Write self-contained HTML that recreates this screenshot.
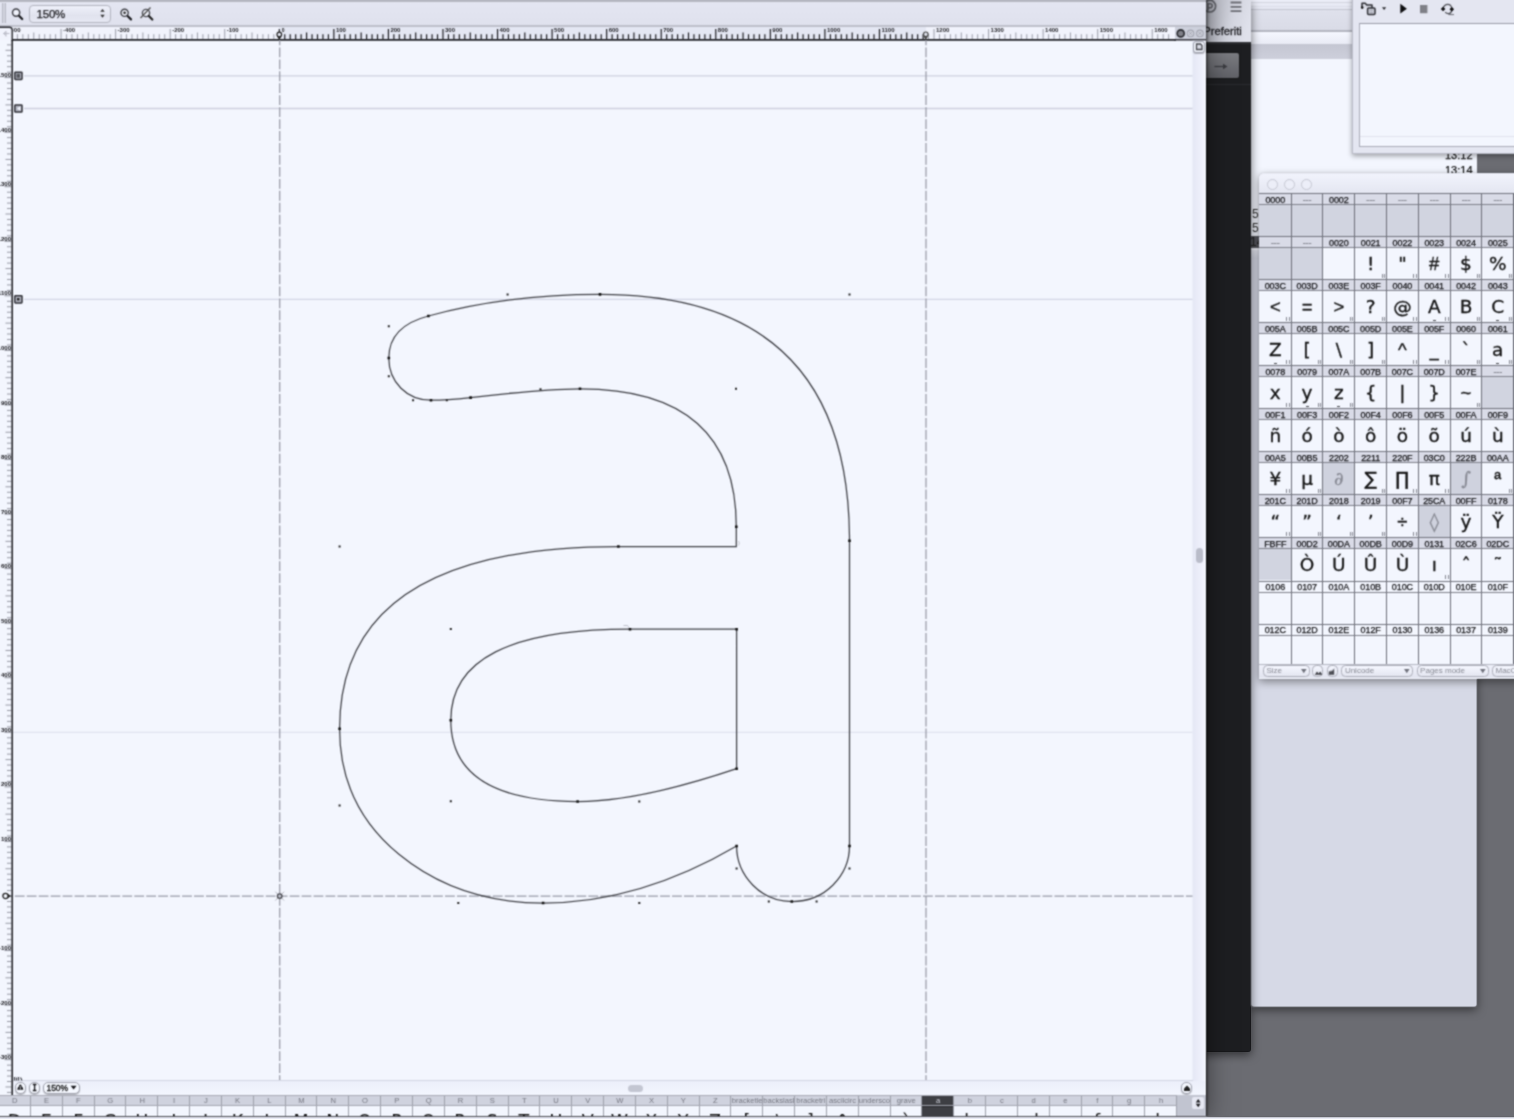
<!DOCTYPE html>
<html><head><meta charset="utf-8"><title>Glyph editor</title>
<style>
html,body{margin:0;padding:0}
body{width:1514px;height:1119px;overflow:hidden;background:#6b6c72;position:relative;font-family:"Liberation Sans","DejaVu Sans",sans-serif;color:#222}
div,svg,span{position:absolute;box-sizing:border-box}
.t{white-space:nowrap}
#all{left:0;top:0;width:1514px;height:1119px;overflow:hidden;filter:url(#bl)}
</style></head><body><svg width="0" height="0" style="left:0;top:0"><filter id="bl" x="0" y="0" width="100%" height="100%" color-interpolation-filters="sRGB"><feConvolveMatrix order="3" kernelMatrix="1 2 1 2 6 2 1 2 1" divisor="18" edgeMode="duplicate" preserveAlpha="true"/></filter></svg><div id="all">
<div style="left:1251px;top:0;width:226px;height:1007px;background:#d6d9e6;border-radius:0 0 3px 3px;box-shadow:0 3px 10px rgba(0,0,0,.5)"></div><div style="left:1251px;top:0;width:226px;height:236px;background:#f3f6fe"></div><div style="left:1251px;top:0;width:226px;height:10px;background:linear-gradient(#eceef8,#e4e6f1)"></div><div style="left:1251px;top:2px;width:226px;height:1px;background:#d2d4df"></div><div style="left:1251px;top:5.500px;width:226px;height:1px;background:#dcdee9"></div><div style="left:1251px;top:9px;width:226px;height:1px;background:#c3c5d0"></div><div style="left:1251px;top:10px;width:226px;height:21px;background:linear-gradient(#dfe1ec,#d9dbe6)"></div><div style="left:1251px;top:30px;width:226px;height:1.500px;background:#b3b5c0"></div><div style="left:1251px;top:32px;width:226px;height:12px;background:linear-gradient(#f5f7ff,#e9ebf5)"></div><div style="left:1251px;top:44px;width:226px;height:15px;background:linear-gradient(#c4c6d2,#cdcfdb)"></div><div class="t" style="left:1252px;top:207px;font-size:12px;color:#333">5</div><div class="t" style="left:1252px;top:221px;font-size:12px;color:#333">5</div><div style="left:1251px;top:236px;width:226px;height:12px;background:#55565c"></div><div class="t" style="left:1250px;top:235px;font-size:12px;color:#222">14</div><div style="left:1251px;top:248px;width:226px;height:2px;background:#f3f5fd"></div><div style="left:1251px;top:250px;width:226px;height:9px;background:linear-gradient(#e6e8f2,#d3d6e2)"></div><div style="left:1477px;top:150px;width:40px;height:24px;background:#6b6c72"></div><div class="t" style="left:1445px;top:148px;font-size:11px;color:#111;-webkit-text-stroke:.25px #111;margin-top:1px">13:12</div><div class="t" style="left:1445px;top:163px;font-size:11px;color:#111;-webkit-text-stroke:.25px #111;margin-top:1px">13:14</div><div style="left:1200px;top:0;width:51px;height:1052px;background:#1d1e21;border-radius:0 0 3px 3px;box-shadow:0 3px 10px rgba(0,0,0,.55)"></div><div style="left:1200px;top:0;width:51px;height:42px;background:linear-gradient(105deg,#9b9da6 6px,#b9bbc5 16px,#d2d4de 34px,#dfe1eb 54px)"></div><div style="left:1200px;top:42px;width:51px;height:2px;background:#2e2f33"></div><div class="t" style="left:1203.3px;top:23.9px;font-size:11.2px;line-height:14px;color:#1b1b1f;-webkit-text-stroke:.3px #1b1b1f">Preferiti</div><svg style="left:1200px;top:0" width="51" height="20" viewBox="1200 0 51 20"><circle cx="1209.800" cy="6.200" r="5.800" fill="none" stroke="#5e5f66" stroke-width="1.700"/><path d="M1208 10.500V3.800h2.200a2 2 0 0 1 0 4h-2" fill="none" stroke="#5e5f66" stroke-width="1.600"/><path d="M1230.600 2.500h10.800M1230.600 6.800h10.800M1230.600 11.100h10.800" stroke="#6a6b72" stroke-width="1.800"/></svg><div style="left:1203px;top:52px;width:37px;height:27px;background:#17181a;border-radius:3px"></div><div style="left:1203px;top:53px;width:36px;height:25px;background:linear-gradient(#7b7c81,#606167);border-radius:2px"></div><svg style="left:1206px;top:53px" width="33" height="25" viewBox="0 0 33 25"><path d="M8.500 13.500h9" stroke="#3a3b40" stroke-width="1.200"/><path d="M17 10.800l4.500 2.700-4.500 2.700z" fill="#3a3b40"/></svg><div style="left:1200px;top:84px;width:51px;height:1px;background:#2a2b2f"></div><div style="left:1351.800px;top:-4px;width:170px;height:158px;background:#e4e6f1;border:1px solid #b9bbc7;box-shadow:0 2px 5px rgba(0,0,0,.35)"></div><div style="left:1359px;top:23px;width:160px;height:124px;background:#f3f6fe;border:1px solid #a9abb7;border-top-color:#9a9ca8"></div><div style="left:1360px;top:136px;width:160px;height:1px;background:#e1e3ee"></div><svg style="left:1352px;top:0" width="162" height="22" viewBox="1352 0 162 22">
<path d="M1362 8V3.200h3.200l1.600 1.800h5.200v3.500" fill="#d9dbe5" stroke="#2e2f34" stroke-width="1.500" stroke-linejoin="round"/>
<rect x="1367.600" y="8" width="7.400" height="6.600" rx="1" fill="#cfd1dc" stroke="#2e2f34" stroke-width="1.500"/>
<path d="M1369.500 10.500h3.600M1369.500 12.500h3.600" stroke="#9a9ca6" stroke-width=".8"/>
<circle cx="1362.200" cy="7.600" r="1.300" fill="#111"/>
<path d="M1382 7.200h4.200l-2.100 2.800z" fill="#2a2a2e"/>
<path d="M1400.300 3.800l6.600 4.900-6.600 4.900z" fill="#0c0c0e"/>
<rect x="1420" y="5" width="7.400" height="8.200" fill="#7f8087"/>
<path d="M1443 8.600q1.200-4.200 4.800-4.200q3.200 0 4 3.800" fill="none" stroke="#4c4d53" stroke-width="1.200"/>
<path d="M1452 10q-.8 3.600-3.600 3.600q-2 0-3.200-1.400" fill="none" stroke="#4c4d53" stroke-width="1.200"/>
<path d="M1448.500 14.600h5.500" stroke="#6c6d74" stroke-width="1"/>
<path d="M1440.800 9l2.300-2.200 2.300 2.200-2.300 2.200zM1449.500 9.200l2.300-2.200 2.300 2.200-2.300 2.200z" fill="#0c0c0e"/>
</svg><div style="left:1259.4px;top:173px;width:262px;height:506px;background:#f3f6fe;border-radius:5px 0 0 0;box-shadow:0 3px 8px rgba(0,0,0,.4),0 0 1px rgba(0,0,0,.4)"></div><div style="left:1259.4px;top:173px;width:262px;height:20px;background:linear-gradient(#f1f3fc,#e4e6f1);border-radius:5px 0 0 0;border-top:1px solid #e8eaf4"></div><div style="left:1266.5px;top:178.500px;width:11px;height:11px;border-radius:6px;border:1px solid #c4c6d1;background:#eceef8"></div><div style="left:1283.5px;top:178.500px;width:11px;height:11px;border-radius:6px;border:1px solid #c4c6d1;background:#eceef8"></div><div style="left:1300.5px;top:178.500px;width:11px;height:11px;border-radius:6px;border:1px solid #c4c6d1;background:#eceef8"></div><div style="left:1259.4px;top:193.0px;width:260px;height:470.500px;overflow:hidden"><div style="left:0.00px;top:0.00px;width:31.79px;height:12px;background:#d9dbe7"></div><div style="left:0.00px;top:12.00px;width:31.79px;height:31px;background:#d1d4e0"></div><div class="t" style="left:0.00px;top:0.50px;width:31.79px;height:12px;line-height:12.5px;text-align:center;font-size:9px;color:#111114;-webkit-text-stroke:.25px #111114;letter-spacing:-.1px">0000</div><div style="left:31.79px;top:0.00px;width:31.79px;height:12px;background:#d9dbe7"></div><div style="left:31.79px;top:12.00px;width:31.79px;height:31px;background:#d1d4e0"></div><div class="t" style="left:31.79px;top:0.50px;width:31.79px;height:12px;line-height:12.5px;text-align:center;font-size:9px;color:#7d7f89;-webkit-text-stroke:.25px #7d7f89;letter-spacing:-.1px">---</div><div style="left:63.57px;top:0.00px;width:31.79px;height:12px;background:#d9dbe7"></div><div style="left:63.57px;top:12.00px;width:31.79px;height:31px;background:#d1d4e0"></div><div class="t" style="left:63.57px;top:0.50px;width:31.79px;height:12px;line-height:12.5px;text-align:center;font-size:9px;color:#111114;-webkit-text-stroke:.25px #111114;letter-spacing:-.1px">0002</div><div style="left:95.36px;top:0.00px;width:31.79px;height:12px;background:#d9dbe7"></div><div style="left:95.36px;top:12.00px;width:31.79px;height:31px;background:#d1d4e0"></div><div class="t" style="left:95.36px;top:0.50px;width:31.79px;height:12px;line-height:12.5px;text-align:center;font-size:9px;color:#7d7f89;-webkit-text-stroke:.25px #7d7f89;letter-spacing:-.1px">---</div><div style="left:127.14px;top:0.00px;width:31.79px;height:12px;background:#d9dbe7"></div><div style="left:127.14px;top:12.00px;width:31.79px;height:31px;background:#d1d4e0"></div><div class="t" style="left:127.14px;top:0.50px;width:31.79px;height:12px;line-height:12.5px;text-align:center;font-size:9px;color:#7d7f89;-webkit-text-stroke:.25px #7d7f89;letter-spacing:-.1px">---</div><div style="left:158.93px;top:0.00px;width:31.79px;height:12px;background:#d9dbe7"></div><div style="left:158.93px;top:12.00px;width:31.79px;height:31px;background:#d1d4e0"></div><div class="t" style="left:158.93px;top:0.50px;width:31.79px;height:12px;line-height:12.5px;text-align:center;font-size:9px;color:#7d7f89;-webkit-text-stroke:.25px #7d7f89;letter-spacing:-.1px">---</div><div style="left:190.72px;top:0.00px;width:31.79px;height:12px;background:#d9dbe7"></div><div style="left:190.72px;top:12.00px;width:31.79px;height:31px;background:#d1d4e0"></div><div class="t" style="left:190.72px;top:0.50px;width:31.79px;height:12px;line-height:12.5px;text-align:center;font-size:9px;color:#7d7f89;-webkit-text-stroke:.25px #7d7f89;letter-spacing:-.1px">---</div><div style="left:222.50px;top:0.00px;width:31.79px;height:12px;background:#d9dbe7"></div><div style="left:222.50px;top:12.00px;width:31.79px;height:31px;background:#d1d4e0"></div><div class="t" style="left:222.50px;top:0.50px;width:31.79px;height:12px;line-height:12.5px;text-align:center;font-size:9px;color:#7d7f89;-webkit-text-stroke:.25px #7d7f89;letter-spacing:-.1px">---</div><div style="left:0;top:0.00px;width:262px;height:1px;background:#72747e"></div><div style="left:0;top:11.00px;width:262px;height:1px;background:#7f818b"></div><div style="left:0.00px;top:43.06px;width:31.79px;height:12px;background:#d9dbe7"></div><div style="left:0.00px;top:55.06px;width:31.79px;height:31px;background:#d1d4e0"></div><div class="t" style="left:0.00px;top:43.56px;width:31.79px;height:12px;line-height:12.5px;text-align:center;font-size:9px;color:#7d7f89;-webkit-text-stroke:.25px #7d7f89;letter-spacing:-.1px">---</div><div style="left:31.79px;top:43.06px;width:31.79px;height:12px;background:#d9dbe7"></div><div style="left:31.79px;top:55.06px;width:31.79px;height:31px;background:#d1d4e0"></div><div class="t" style="left:31.79px;top:43.56px;width:31.79px;height:12px;line-height:12.5px;text-align:center;font-size:9px;color:#7d7f89;-webkit-text-stroke:.25px #7d7f89;letter-spacing:-.1px">---</div><div style="left:63.57px;top:43.06px;width:31.79px;height:12px;background:#d9dbe7"></div><div style="left:63.57px;top:55.06px;width:31.79px;height:31px;background:#f3f6fe"></div><div class="t" style="left:63.57px;top:43.56px;width:31.79px;height:12px;line-height:12.5px;text-align:center;font-size:9px;color:#111114;-webkit-text-stroke:.25px #111114;letter-spacing:-.1px">0020</div><div style="left:95.36px;top:43.06px;width:31.79px;height:12px;background:#d9dbe7"></div><div style="left:95.36px;top:55.06px;width:31.79px;height:31px;background:#f3f6fe"></div><div class="t" style="left:95.36px;top:43.56px;width:31.79px;height:12px;line-height:12.5px;text-align:center;font-size:9px;color:#111114;-webkit-text-stroke:.25px #111114;letter-spacing:-.1px">0021</div><div class="t" style="left:95.36px;top:54.86px;width:31.79px;height:31px;line-height:31px;text-align:center;font-size:18.500px;-webkit-text-stroke:.3px #111;font-family:'DejaVu Sans','Liberation Sans',sans-serif;color:#111">!</div><div style="left:122.14px;top:81.06px;width:3.500px;height:4px;border-left:1.200px solid #83858f;border-right:1.200px solid #83858f"></div><div style="left:127.14px;top:43.06px;width:31.79px;height:12px;background:#d9dbe7"></div><div style="left:127.14px;top:55.06px;width:31.79px;height:31px;background:#f3f6fe"></div><div class="t" style="left:127.14px;top:43.56px;width:31.79px;height:12px;line-height:12.5px;text-align:center;font-size:9px;color:#111114;-webkit-text-stroke:.25px #111114;letter-spacing:-.1px">0022</div><div class="t" style="left:127.14px;top:54.86px;width:31.79px;height:31px;line-height:31px;text-align:center;font-size:18.500px;-webkit-text-stroke:.3px #111;font-family:'DejaVu Sans','Liberation Sans',sans-serif;color:#111">&quot;</div><div style="left:153.93px;top:81.06px;width:3.500px;height:4px;border-left:1.200px solid #83858f;border-right:1.200px solid #83858f"></div><div style="left:158.93px;top:43.06px;width:31.79px;height:12px;background:#d9dbe7"></div><div style="left:158.93px;top:55.06px;width:31.79px;height:31px;background:#f3f6fe"></div><div class="t" style="left:158.93px;top:43.56px;width:31.79px;height:12px;line-height:12.5px;text-align:center;font-size:9px;color:#111114;-webkit-text-stroke:.25px #111114;letter-spacing:-.1px">0023</div><div class="t" style="left:158.93px;top:54.86px;width:31.79px;height:31px;line-height:31px;text-align:center;font-size:18.500px;-webkit-text-stroke:.3px #111;font-family:'Liberation Sans',sans-serif;color:#111">#</div><div style="left:185.72px;top:81.06px;width:3.500px;height:4px;border-left:1.200px solid #83858f;border-right:1.200px solid #83858f"></div><div style="left:190.72px;top:43.06px;width:31.79px;height:12px;background:#d9dbe7"></div><div style="left:190.72px;top:55.06px;width:31.79px;height:31px;background:#f3f6fe"></div><div class="t" style="left:190.72px;top:43.56px;width:31.79px;height:12px;line-height:12.5px;text-align:center;font-size:9px;color:#111114;-webkit-text-stroke:.25px #111114;letter-spacing:-.1px">0024</div><div class="t" style="left:190.72px;top:54.86px;width:31.79px;height:31px;line-height:31px;text-align:center;font-size:18.500px;-webkit-text-stroke:.3px #111;font-family:'DejaVu Sans','Liberation Sans',sans-serif;color:#111">$</div><div style="left:217.50px;top:81.06px;width:3.500px;height:4px;border-left:1.200px solid #83858f;border-right:1.200px solid #83858f"></div><div style="left:222.50px;top:43.06px;width:31.79px;height:12px;background:#d9dbe7"></div><div style="left:222.50px;top:55.06px;width:31.79px;height:31px;background:#f3f6fe"></div><div class="t" style="left:222.50px;top:43.56px;width:31.79px;height:12px;line-height:12.5px;text-align:center;font-size:9px;color:#111114;-webkit-text-stroke:.25px #111114;letter-spacing:-.1px">0025</div><div class="t" style="left:222.50px;top:54.86px;width:31.79px;height:31px;line-height:31px;text-align:center;font-size:18.500px;-webkit-text-stroke:.3px #111;font-family:'DejaVu Sans','Liberation Sans',sans-serif;color:#111">%</div><div style="left:249.29px;top:81.06px;width:3.500px;height:4px;border-left:1.200px solid #83858f;border-right:1.200px solid #83858f"></div><div style="left:0;top:43.00px;width:262px;height:1px;background:#72747e"></div><div style="left:0;top:54.00px;width:262px;height:1px;background:#7f818b"></div><div style="left:0.00px;top:86.12px;width:31.79px;height:12px;background:#d9dbe7"></div><div style="left:0.00px;top:98.12px;width:31.79px;height:31px;background:#f3f6fe"></div><div class="t" style="left:0.00px;top:86.62px;width:31.79px;height:12px;line-height:12.5px;text-align:center;font-size:9px;color:#111114;-webkit-text-stroke:.25px #111114;letter-spacing:-.1px">003C</div><div class="t" style="left:0.00px;top:97.92px;width:31.79px;height:31px;line-height:31px;text-align:center;font-size:18.500px;-webkit-text-stroke:.3px #111;font-family:'Liberation Sans',sans-serif;color:#111">&lt;</div><div style="left:26.79px;top:124.12px;width:3.500px;height:4px;border-left:1.200px solid #83858f;border-right:1.200px solid #83858f"></div><div style="left:31.79px;top:86.12px;width:31.79px;height:12px;background:#d9dbe7"></div><div style="left:31.79px;top:98.12px;width:31.79px;height:31px;background:#f3f6fe"></div><div class="t" style="left:31.79px;top:86.62px;width:31.79px;height:12px;line-height:12.5px;text-align:center;font-size:9px;color:#111114;-webkit-text-stroke:.25px #111114;letter-spacing:-.1px">003D</div><div class="t" style="left:31.79px;top:97.92px;width:31.79px;height:31px;line-height:31px;text-align:center;font-size:18.500px;-webkit-text-stroke:.3px #111;font-family:'Liberation Sans',sans-serif;color:#111">=</div><div style="left:63.57px;top:86.12px;width:31.79px;height:12px;background:#d9dbe7"></div><div style="left:63.57px;top:98.12px;width:31.79px;height:31px;background:#f3f6fe"></div><div class="t" style="left:63.57px;top:86.62px;width:31.79px;height:12px;line-height:12.5px;text-align:center;font-size:9px;color:#111114;-webkit-text-stroke:.25px #111114;letter-spacing:-.1px">003E</div><div class="t" style="left:63.57px;top:97.92px;width:31.79px;height:31px;line-height:31px;text-align:center;font-size:18.500px;-webkit-text-stroke:.3px #111;font-family:'Liberation Sans',sans-serif;color:#111">&gt;</div><div style="left:90.36px;top:124.12px;width:3.500px;height:4px;border-left:1.200px solid #83858f;border-right:1.200px solid #83858f"></div><div style="left:95.36px;top:86.12px;width:31.79px;height:12px;background:#d9dbe7"></div><div style="left:95.36px;top:98.12px;width:31.79px;height:31px;background:#f3f6fe"></div><div class="t" style="left:95.36px;top:86.62px;width:31.79px;height:12px;line-height:12.5px;text-align:center;font-size:9px;color:#111114;-webkit-text-stroke:.25px #111114;letter-spacing:-.1px">003F</div><div class="t" style="left:95.36px;top:97.92px;width:31.79px;height:31px;line-height:31px;text-align:center;font-size:18.500px;-webkit-text-stroke:.3px #111;font-family:'DejaVu Sans','Liberation Sans',sans-serif;color:#111">?</div><div style="left:122.14px;top:124.12px;width:3.500px;height:4px;border-left:1.200px solid #83858f;border-right:1.200px solid #83858f"></div><div style="left:127.14px;top:86.12px;width:31.79px;height:12px;background:#d9dbe7"></div><div style="left:127.14px;top:98.12px;width:31.79px;height:31px;background:#f3f6fe"></div><div class="t" style="left:127.14px;top:86.62px;width:31.79px;height:12px;line-height:12.5px;text-align:center;font-size:9px;color:#111114;-webkit-text-stroke:.25px #111114;letter-spacing:-.1px">0040</div><div class="t" style="left:127.14px;top:97.92px;width:31.79px;height:31px;line-height:31px;text-align:center;font-size:18.500px;-webkit-text-stroke:.3px #111;font-family:'DejaVu Sans','Liberation Sans',sans-serif;color:#111">@</div><div style="left:153.93px;top:124.12px;width:3.500px;height:4px;border-left:1.200px solid #83858f;border-right:1.200px solid #83858f"></div><div style="left:158.93px;top:86.12px;width:31.79px;height:12px;background:#d9dbe7"></div><div style="left:158.93px;top:98.12px;width:31.79px;height:31px;background:#f3f6fe"></div><div class="t" style="left:158.93px;top:86.62px;width:31.79px;height:12px;line-height:12.5px;text-align:center;font-size:9px;color:#111114;-webkit-text-stroke:.25px #111114;letter-spacing:-.1px">0041</div><div class="t" style="left:158.93px;top:97.92px;width:31.79px;height:31px;line-height:31px;text-align:center;font-size:18.500px;-webkit-text-stroke:.3px #111;font-family:'DejaVu Sans','Liberation Sans',sans-serif;color:#111">A</div><div style="left:185.72px;top:124.12px;width:3.500px;height:4px;border-left:1.200px solid #83858f;border-right:1.200px solid #83858f"></div><div style="left:173.32px;top:126.62px;width:3px;height:1.500px;background:#44454b"></div><div style="left:190.72px;top:86.12px;width:31.79px;height:12px;background:#d9dbe7"></div><div style="left:190.72px;top:98.12px;width:31.79px;height:31px;background:#f3f6fe"></div><div class="t" style="left:190.72px;top:86.62px;width:31.79px;height:12px;line-height:12.5px;text-align:center;font-size:9px;color:#111114;-webkit-text-stroke:.25px #111114;letter-spacing:-.1px">0042</div><div class="t" style="left:190.72px;top:97.92px;width:31.79px;height:31px;line-height:31px;text-align:center;font-size:18.500px;-webkit-text-stroke:.3px #111;font-family:'DejaVu Sans','Liberation Sans',sans-serif;color:#111">B</div><div style="left:217.50px;top:124.12px;width:3.500px;height:4px;border-left:1.200px solid #83858f;border-right:1.200px solid #83858f"></div><div style="left:222.50px;top:86.12px;width:31.79px;height:12px;background:#d9dbe7"></div><div style="left:222.50px;top:98.12px;width:31.79px;height:31px;background:#f3f6fe"></div><div class="t" style="left:222.50px;top:86.62px;width:31.79px;height:12px;line-height:12.5px;text-align:center;font-size:9px;color:#111114;-webkit-text-stroke:.25px #111114;letter-spacing:-.1px">0043</div><div class="t" style="left:222.50px;top:97.92px;width:31.79px;height:31px;line-height:31px;text-align:center;font-size:18.500px;-webkit-text-stroke:.3px #111;font-family:'DejaVu Sans','Liberation Sans',sans-serif;color:#111">C</div><div style="left:249.29px;top:124.12px;width:3.500px;height:4px;border-left:1.200px solid #83858f;border-right:1.200px solid #83858f"></div><div style="left:236.90px;top:126.62px;width:3px;height:1.500px;background:#44454b"></div><div style="left:0;top:86.00px;width:262px;height:1px;background:#72747e"></div><div style="left:0;top:97.00px;width:262px;height:1px;background:#7f818b"></div><div style="left:0.00px;top:129.18px;width:31.79px;height:12px;background:#d9dbe7"></div><div style="left:0.00px;top:141.18px;width:31.79px;height:31px;background:#f3f6fe"></div><div class="t" style="left:0.00px;top:129.68px;width:31.79px;height:12px;line-height:12.5px;text-align:center;font-size:9px;color:#111114;-webkit-text-stroke:.25px #111114;letter-spacing:-.1px">005A</div><div class="t" style="left:0.00px;top:140.98px;width:31.79px;height:31px;line-height:31px;text-align:center;font-size:18.500px;-webkit-text-stroke:.3px #111;font-family:'DejaVu Sans','Liberation Sans',sans-serif;color:#111">Z</div><div style="left:26.79px;top:167.18px;width:3.500px;height:4px;border-left:1.200px solid #83858f;border-right:1.200px solid #83858f"></div><div style="left:14.39px;top:169.68px;width:3px;height:1.500px;background:#44454b"></div><div style="left:31.79px;top:129.18px;width:31.79px;height:12px;background:#d9dbe7"></div><div style="left:31.79px;top:141.18px;width:31.79px;height:31px;background:#f3f6fe"></div><div class="t" style="left:31.79px;top:129.68px;width:31.79px;height:12px;line-height:12.5px;text-align:center;font-size:9px;color:#111114;-webkit-text-stroke:.25px #111114;letter-spacing:-.1px">005B</div><div class="t" style="left:31.79px;top:140.98px;width:31.79px;height:31px;line-height:31px;text-align:center;font-size:18.500px;-webkit-text-stroke:.3px #111;font-family:'DejaVu Sans','Liberation Sans',sans-serif;color:#111">[</div><div style="left:58.57px;top:167.18px;width:3.500px;height:4px;border-left:1.200px solid #83858f;border-right:1.200px solid #83858f"></div><div style="left:63.57px;top:129.18px;width:31.79px;height:12px;background:#d9dbe7"></div><div style="left:63.57px;top:141.18px;width:31.79px;height:31px;background:#f3f6fe"></div><div class="t" style="left:63.57px;top:129.68px;width:31.79px;height:12px;line-height:12.5px;text-align:center;font-size:9px;color:#111114;-webkit-text-stroke:.25px #111114;letter-spacing:-.1px">005C</div><div class="t" style="left:63.57px;top:140.98px;width:31.79px;height:31px;line-height:31px;text-align:center;font-size:18.500px;-webkit-text-stroke:.3px #111;font-family:'DejaVu Sans','Liberation Sans',sans-serif;color:#111">\</div><div style="left:90.36px;top:167.18px;width:3.500px;height:4px;border-left:1.200px solid #83858f;border-right:1.200px solid #83858f"></div><div style="left:95.36px;top:129.18px;width:31.79px;height:12px;background:#d9dbe7"></div><div style="left:95.36px;top:141.18px;width:31.79px;height:31px;background:#f3f6fe"></div><div class="t" style="left:95.36px;top:129.68px;width:31.79px;height:12px;line-height:12.5px;text-align:center;font-size:9px;color:#111114;-webkit-text-stroke:.25px #111114;letter-spacing:-.1px">005D</div><div class="t" style="left:95.36px;top:140.98px;width:31.79px;height:31px;line-height:31px;text-align:center;font-size:18.500px;-webkit-text-stroke:.3px #111;font-family:'DejaVu Sans','Liberation Sans',sans-serif;color:#111">]</div><div style="left:122.14px;top:167.18px;width:3.500px;height:4px;border-left:1.200px solid #83858f;border-right:1.200px solid #83858f"></div><div style="left:127.14px;top:129.18px;width:31.79px;height:12px;background:#d9dbe7"></div><div style="left:127.14px;top:141.18px;width:31.79px;height:31px;background:#f3f6fe"></div><div class="t" style="left:127.14px;top:129.68px;width:31.79px;height:12px;line-height:12.5px;text-align:center;font-size:9px;color:#111114;-webkit-text-stroke:.25px #111114;letter-spacing:-.1px">005E</div><div class="t" style="left:127.14px;top:140.98px;width:31.79px;height:31px;line-height:31px;text-align:center;font-size:18.500px;-webkit-text-stroke:.3px #111;font-family:'Liberation Sans',sans-serif;color:#111">^</div><div style="left:153.93px;top:167.18px;width:3.500px;height:4px;border-left:1.200px solid #83858f;border-right:1.200px solid #83858f"></div><div style="left:158.93px;top:129.18px;width:31.79px;height:12px;background:#d9dbe7"></div><div style="left:158.93px;top:141.18px;width:31.79px;height:31px;background:#f3f6fe"></div><div class="t" style="left:158.93px;top:129.68px;width:31.79px;height:12px;line-height:12.5px;text-align:center;font-size:9px;color:#111114;-webkit-text-stroke:.25px #111114;letter-spacing:-.1px">005F</div><div class="t" style="left:158.93px;top:140.98px;width:31.79px;height:31px;line-height:31px;text-align:center;font-size:18.500px;-webkit-text-stroke:.3px #111;font-family:'DejaVu Sans','Liberation Sans',sans-serif;color:#111">_</div><div style="left:185.72px;top:167.18px;width:3.500px;height:4px;border-left:1.200px solid #83858f;border-right:1.200px solid #83858f"></div><div style="left:190.72px;top:129.18px;width:31.79px;height:12px;background:#d9dbe7"></div><div style="left:190.72px;top:141.18px;width:31.79px;height:31px;background:#f3f6fe"></div><div class="t" style="left:190.72px;top:129.68px;width:31.79px;height:12px;line-height:12.5px;text-align:center;font-size:9px;color:#111114;-webkit-text-stroke:.25px #111114;letter-spacing:-.1px">0060</div><div class="t" style="left:190.72px;top:140.98px;width:31.79px;height:31px;line-height:31px;text-align:center;font-size:18.500px;-webkit-text-stroke:.3px #111;font-family:'DejaVu Sans','Liberation Sans',sans-serif;color:#111">`</div><div style="left:217.50px;top:167.18px;width:3.500px;height:4px;border-left:1.200px solid #83858f;border-right:1.200px solid #83858f"></div><div style="left:222.50px;top:129.18px;width:31.79px;height:12px;background:#d9dbe7"></div><div style="left:222.50px;top:141.18px;width:31.79px;height:31px;background:#f3f6fe"></div><div class="t" style="left:222.50px;top:129.68px;width:31.79px;height:12px;line-height:12.5px;text-align:center;font-size:9px;color:#111114;-webkit-text-stroke:.25px #111114;letter-spacing:-.1px">0061</div><div class="t" style="left:222.50px;top:140.98px;width:31.79px;height:31px;line-height:31px;text-align:center;font-size:18.500px;-webkit-text-stroke:.3px #111;font-family:'DejaVu Sans','Liberation Sans',sans-serif;color:#111">a</div><div style="left:249.29px;top:167.18px;width:3.500px;height:4px;border-left:1.200px solid #83858f;border-right:1.200px solid #83858f"></div><div style="left:236.90px;top:169.68px;width:3px;height:1.500px;background:#44454b"></div><div style="left:0;top:129.00px;width:262px;height:1px;background:#72747e"></div><div style="left:0;top:140.00px;width:262px;height:1px;background:#7f818b"></div><div style="left:0.00px;top:172.24px;width:31.79px;height:12px;background:#d9dbe7"></div><div style="left:0.00px;top:184.24px;width:31.79px;height:31px;background:#f3f6fe"></div><div class="t" style="left:0.00px;top:172.74px;width:31.79px;height:12px;line-height:12.5px;text-align:center;font-size:9px;color:#111114;-webkit-text-stroke:.25px #111114;letter-spacing:-.1px">0078</div><div class="t" style="left:0.00px;top:184.04px;width:31.79px;height:31px;line-height:31px;text-align:center;font-size:18.500px;-webkit-text-stroke:.3px #111;font-family:'DejaVu Sans','Liberation Sans',sans-serif;color:#111">x</div><div style="left:26.79px;top:210.24px;width:3.500px;height:4px;border-left:1.200px solid #83858f;border-right:1.200px solid #83858f"></div><div style="left:31.79px;top:172.24px;width:31.79px;height:12px;background:#d9dbe7"></div><div style="left:31.79px;top:184.24px;width:31.79px;height:31px;background:#f3f6fe"></div><div class="t" style="left:31.79px;top:172.74px;width:31.79px;height:12px;line-height:12.5px;text-align:center;font-size:9px;color:#111114;-webkit-text-stroke:.25px #111114;letter-spacing:-.1px">0079</div><div class="t" style="left:31.79px;top:184.04px;width:31.79px;height:31px;line-height:31px;text-align:center;font-size:18.500px;-webkit-text-stroke:.3px #111;font-family:'DejaVu Sans','Liberation Sans',sans-serif;color:#111">y</div><div style="left:58.57px;top:210.24px;width:3.500px;height:4px;border-left:1.200px solid #83858f;border-right:1.200px solid #83858f"></div><div style="left:46.18px;top:212.74px;width:3px;height:1.500px;background:#44454b"></div><div style="left:63.57px;top:172.24px;width:31.79px;height:12px;background:#d9dbe7"></div><div style="left:63.57px;top:184.24px;width:31.79px;height:31px;background:#f3f6fe"></div><div class="t" style="left:63.57px;top:172.74px;width:31.79px;height:12px;line-height:12.5px;text-align:center;font-size:9px;color:#111114;-webkit-text-stroke:.25px #111114;letter-spacing:-.1px">007A</div><div class="t" style="left:63.57px;top:184.04px;width:31.79px;height:31px;line-height:31px;text-align:center;font-size:18.500px;-webkit-text-stroke:.3px #111;font-family:'DejaVu Sans','Liberation Sans',sans-serif;color:#111">z</div><div style="left:90.36px;top:210.24px;width:3.500px;height:4px;border-left:1.200px solid #83858f;border-right:1.200px solid #83858f"></div><div style="left:77.97px;top:212.74px;width:3px;height:1.500px;background:#44454b"></div><div style="left:95.36px;top:172.24px;width:31.79px;height:12px;background:#d9dbe7"></div><div style="left:95.36px;top:184.24px;width:31.79px;height:31px;background:#f3f6fe"></div><div class="t" style="left:95.36px;top:172.74px;width:31.79px;height:12px;line-height:12.5px;text-align:center;font-size:9px;color:#111114;-webkit-text-stroke:.25px #111114;letter-spacing:-.1px">007B</div><div class="t" style="left:95.36px;top:184.04px;width:31.79px;height:31px;line-height:31px;text-align:center;font-size:18.500px;-webkit-text-stroke:.3px #111;font-family:'DejaVu Sans','Liberation Sans',sans-serif;color:#111">{</div><div style="left:127.14px;top:172.24px;width:31.79px;height:12px;background:#d9dbe7"></div><div style="left:127.14px;top:184.24px;width:31.79px;height:31px;background:#f3f6fe"></div><div class="t" style="left:127.14px;top:172.74px;width:31.79px;height:12px;line-height:12.5px;text-align:center;font-size:9px;color:#111114;-webkit-text-stroke:.25px #111114;letter-spacing:-.1px">007C</div><div class="t" style="left:127.14px;top:184.04px;width:31.79px;height:31px;line-height:31px;text-align:center;font-size:18.500px;-webkit-text-stroke:.3px #111;font-family:'DejaVu Sans','Liberation Sans',sans-serif;color:#111">|</div><div style="left:158.93px;top:172.24px;width:31.79px;height:12px;background:#d9dbe7"></div><div style="left:158.93px;top:184.24px;width:31.79px;height:31px;background:#f3f6fe"></div><div class="t" style="left:158.93px;top:172.74px;width:31.79px;height:12px;line-height:12.5px;text-align:center;font-size:9px;color:#111114;-webkit-text-stroke:.25px #111114;letter-spacing:-.1px">007D</div><div class="t" style="left:158.93px;top:184.04px;width:31.79px;height:31px;line-height:31px;text-align:center;font-size:18.500px;-webkit-text-stroke:.3px #111;font-family:'DejaVu Sans','Liberation Sans',sans-serif;color:#111">}</div><div style="left:190.72px;top:172.24px;width:31.79px;height:12px;background:#d9dbe7"></div><div style="left:190.72px;top:184.24px;width:31.79px;height:31px;background:#f3f6fe"></div><div class="t" style="left:190.72px;top:172.74px;width:31.79px;height:12px;line-height:12.5px;text-align:center;font-size:9px;color:#111114;-webkit-text-stroke:.25px #111114;letter-spacing:-.1px">007E</div><div class="t" style="left:190.72px;top:184.04px;width:31.79px;height:31px;line-height:31px;text-align:center;font-size:18.500px;-webkit-text-stroke:.3px #111;font-family:'Liberation Sans',sans-serif;color:#111">~</div><div style="left:217.50px;top:210.24px;width:3.500px;height:4px;border-left:1.200px solid #83858f;border-right:1.200px solid #83858f"></div><div style="left:222.50px;top:172.24px;width:31.79px;height:12px;background:#d9dbe7"></div><div style="left:222.50px;top:184.24px;width:31.79px;height:31px;background:#d1d4e0"></div><div class="t" style="left:222.50px;top:172.74px;width:31.79px;height:12px;line-height:12.5px;text-align:center;font-size:9px;color:#7d7f89;-webkit-text-stroke:.25px #7d7f89;letter-spacing:-.1px">---</div><div style="left:0;top:172.00px;width:262px;height:1px;background:#72747e"></div><div style="left:0;top:183.00px;width:262px;height:1px;background:#7f818b"></div><div style="left:0.00px;top:215.30px;width:31.79px;height:12px;background:#d9dbe7"></div><div style="left:0.00px;top:227.30px;width:31.79px;height:31px;background:#f3f6fe"></div><div class="t" style="left:0.00px;top:215.80px;width:31.79px;height:12px;line-height:12.5px;text-align:center;font-size:9px;color:#111114;-webkit-text-stroke:.25px #111114;letter-spacing:-.1px">00F1</div><div class="t" style="left:0.00px;top:227.10px;width:31.79px;height:31px;line-height:31px;text-align:center;font-size:18.500px;-webkit-text-stroke:.3px #111;font-family:'DejaVu Sans','Liberation Sans',sans-serif;color:#111">ñ</div><div style="left:31.79px;top:215.30px;width:31.79px;height:12px;background:#d9dbe7"></div><div style="left:31.79px;top:227.30px;width:31.79px;height:31px;background:#f3f6fe"></div><div class="t" style="left:31.79px;top:215.80px;width:31.79px;height:12px;line-height:12.5px;text-align:center;font-size:9px;color:#111114;-webkit-text-stroke:.25px #111114;letter-spacing:-.1px">00F3</div><div class="t" style="left:31.79px;top:227.10px;width:31.79px;height:31px;line-height:31px;text-align:center;font-size:18.500px;-webkit-text-stroke:.3px #111;font-family:'DejaVu Sans','Liberation Sans',sans-serif;color:#111">ó</div><div style="left:63.57px;top:215.30px;width:31.79px;height:12px;background:#d9dbe7"></div><div style="left:63.57px;top:227.30px;width:31.79px;height:31px;background:#f3f6fe"></div><div class="t" style="left:63.57px;top:215.80px;width:31.79px;height:12px;line-height:12.5px;text-align:center;font-size:9px;color:#111114;-webkit-text-stroke:.25px #111114;letter-spacing:-.1px">00F2</div><div class="t" style="left:63.57px;top:227.10px;width:31.79px;height:31px;line-height:31px;text-align:center;font-size:18.500px;-webkit-text-stroke:.3px #111;font-family:'DejaVu Sans','Liberation Sans',sans-serif;color:#111">ò</div><div style="left:95.36px;top:215.30px;width:31.79px;height:12px;background:#d9dbe7"></div><div style="left:95.36px;top:227.30px;width:31.79px;height:31px;background:#f3f6fe"></div><div class="t" style="left:95.36px;top:215.80px;width:31.79px;height:12px;line-height:12.5px;text-align:center;font-size:9px;color:#111114;-webkit-text-stroke:.25px #111114;letter-spacing:-.1px">00F4</div><div class="t" style="left:95.36px;top:227.10px;width:31.79px;height:31px;line-height:31px;text-align:center;font-size:18.500px;-webkit-text-stroke:.3px #111;font-family:'DejaVu Sans','Liberation Sans',sans-serif;color:#111">ô</div><div style="left:127.14px;top:215.30px;width:31.79px;height:12px;background:#d9dbe7"></div><div style="left:127.14px;top:227.30px;width:31.79px;height:31px;background:#f3f6fe"></div><div class="t" style="left:127.14px;top:215.80px;width:31.79px;height:12px;line-height:12.5px;text-align:center;font-size:9px;color:#111114;-webkit-text-stroke:.25px #111114;letter-spacing:-.1px">00F6</div><div class="t" style="left:127.14px;top:227.10px;width:31.79px;height:31px;line-height:31px;text-align:center;font-size:18.500px;-webkit-text-stroke:.3px #111;font-family:'DejaVu Sans','Liberation Sans',sans-serif;color:#111">ö</div><div style="left:158.93px;top:215.30px;width:31.79px;height:12px;background:#d9dbe7"></div><div style="left:158.93px;top:227.30px;width:31.79px;height:31px;background:#f3f6fe"></div><div class="t" style="left:158.93px;top:215.80px;width:31.79px;height:12px;line-height:12.5px;text-align:center;font-size:9px;color:#111114;-webkit-text-stroke:.25px #111114;letter-spacing:-.1px">00F5</div><div class="t" style="left:158.93px;top:227.10px;width:31.79px;height:31px;line-height:31px;text-align:center;font-size:18.500px;-webkit-text-stroke:.3px #111;font-family:'DejaVu Sans','Liberation Sans',sans-serif;color:#111">õ</div><div style="left:190.72px;top:215.30px;width:31.79px;height:12px;background:#d9dbe7"></div><div style="left:190.72px;top:227.30px;width:31.79px;height:31px;background:#f3f6fe"></div><div class="t" style="left:190.72px;top:215.80px;width:31.79px;height:12px;line-height:12.5px;text-align:center;font-size:9px;color:#111114;-webkit-text-stroke:.25px #111114;letter-spacing:-.1px">00FA</div><div class="t" style="left:190.72px;top:227.10px;width:31.79px;height:31px;line-height:31px;text-align:center;font-size:18.500px;-webkit-text-stroke:.3px #111;font-family:'DejaVu Sans','Liberation Sans',sans-serif;color:#111">ú</div><div style="left:222.50px;top:215.30px;width:31.79px;height:12px;background:#d9dbe7"></div><div style="left:222.50px;top:227.30px;width:31.79px;height:31px;background:#f3f6fe"></div><div class="t" style="left:222.50px;top:215.80px;width:31.79px;height:12px;line-height:12.5px;text-align:center;font-size:9px;color:#111114;-webkit-text-stroke:.25px #111114;letter-spacing:-.1px">00F9</div><div class="t" style="left:222.50px;top:227.10px;width:31.79px;height:31px;line-height:31px;text-align:center;font-size:18.500px;-webkit-text-stroke:.3px #111;font-family:'DejaVu Sans','Liberation Sans',sans-serif;color:#111">ù</div><div style="left:0;top:215.00px;width:262px;height:1px;background:#72747e"></div><div style="left:0;top:226.00px;width:262px;height:1px;background:#7f818b"></div><div style="left:0.00px;top:258.36px;width:31.79px;height:12px;background:#d9dbe7"></div><div style="left:0.00px;top:270.36px;width:31.79px;height:31px;background:#f3f6fe"></div><div class="t" style="left:0.00px;top:258.86px;width:31.79px;height:12px;line-height:12.5px;text-align:center;font-size:9px;color:#111114;-webkit-text-stroke:.25px #111114;letter-spacing:-.1px">00A5</div><div class="t" style="left:0.00px;top:270.16px;width:31.79px;height:31px;line-height:31px;text-align:center;font-size:18.500px;-webkit-text-stroke:.3px #111;font-family:'DejaVu Sans','Liberation Sans',sans-serif;color:#111">¥</div><div style="left:26.79px;top:296.36px;width:3.500px;height:4px;border-left:1.200px solid #83858f;border-right:1.200px solid #83858f"></div><div style="left:31.79px;top:258.36px;width:31.79px;height:12px;background:#d9dbe7"></div><div style="left:31.79px;top:270.36px;width:31.79px;height:31px;background:#f3f6fe"></div><div class="t" style="left:31.79px;top:258.86px;width:31.79px;height:12px;line-height:12.5px;text-align:center;font-size:9px;color:#111114;-webkit-text-stroke:.25px #111114;letter-spacing:-.1px">00B5</div><div class="t" style="left:31.79px;top:270.16px;width:31.79px;height:31px;line-height:31px;text-align:center;font-size:18.500px;-webkit-text-stroke:.3px #111;font-family:'DejaVu Sans','Liberation Sans',sans-serif;color:#111">µ</div><div style="left:58.57px;top:296.36px;width:3.500px;height:4px;border-left:1.200px solid #83858f;border-right:1.200px solid #83858f"></div><div style="left:63.57px;top:258.36px;width:31.79px;height:12px;background:#d9dbe7"></div><div style="left:63.57px;top:270.36px;width:31.79px;height:31px;background:#cfd2de"></div><div class="t" style="left:63.57px;top:258.86px;width:31.79px;height:12px;line-height:12.5px;text-align:center;font-size:9px;color:#111114;-webkit-text-stroke:.25px #111114;letter-spacing:-.1px">2202</div><div class="t" style="left:63.57px;top:270.16px;width:31.79px;height:31px;line-height:31px;text-align:center;font-size:18.500px;-webkit-text-stroke:.3px #878993;font-family:'DejaVu Serif','Liberation Serif',serif;color:#878993">∂</div><div style="left:95.36px;top:258.36px;width:31.79px;height:12px;background:#d9dbe7"></div><div style="left:95.36px;top:270.36px;width:31.79px;height:31px;background:#f3f6fe"></div><div class="t" style="left:95.36px;top:258.86px;width:31.79px;height:12px;line-height:12.5px;text-align:center;font-size:9px;color:#111114;-webkit-text-stroke:.25px #111114;letter-spacing:-.1px">2211</div><div class="t" style="left:95.36px;top:270.16px;width:31.79px;height:31px;line-height:31px;text-align:center;font-size:18.500px;-webkit-text-stroke:.3px #111;font-family:'DejaVu Sans','Liberation Sans',sans-serif;color:#111">∑</div><div style="left:122.14px;top:296.36px;width:3.500px;height:4px;border-left:1.200px solid #83858f;border-right:1.200px solid #83858f"></div><div style="left:127.14px;top:258.36px;width:31.79px;height:12px;background:#d9dbe7"></div><div style="left:127.14px;top:270.36px;width:31.79px;height:31px;background:#f3f6fe"></div><div class="t" style="left:127.14px;top:258.86px;width:31.79px;height:12px;line-height:12.5px;text-align:center;font-size:9px;color:#111114;-webkit-text-stroke:.25px #111114;letter-spacing:-.1px">220F</div><div class="t" style="left:127.14px;top:270.16px;width:31.79px;height:31px;line-height:31px;text-align:center;font-size:18.500px;-webkit-text-stroke:.3px #111;font-family:'DejaVu Sans','Liberation Sans',sans-serif;color:#111">∏</div><div style="left:153.93px;top:296.36px;width:3.500px;height:4px;border-left:1.200px solid #83858f;border-right:1.200px solid #83858f"></div><div style="left:158.93px;top:258.36px;width:31.79px;height:12px;background:#d9dbe7"></div><div style="left:158.93px;top:270.36px;width:31.79px;height:31px;background:#f3f6fe"></div><div class="t" style="left:158.93px;top:258.86px;width:31.79px;height:12px;line-height:12.5px;text-align:center;font-size:9px;color:#111114;-webkit-text-stroke:.25px #111114;letter-spacing:-.1px">03C0</div><div class="t" style="left:158.93px;top:270.16px;width:31.79px;height:31px;line-height:31px;text-align:center;font-size:18.500px;-webkit-text-stroke:.3px #111;font-family:'DejaVu Sans','Liberation Sans',sans-serif;color:#111">π</div><div style="left:185.72px;top:296.36px;width:3.500px;height:4px;border-left:1.200px solid #83858f;border-right:1.200px solid #83858f"></div><div style="left:190.72px;top:258.36px;width:31.79px;height:12px;background:#d9dbe7"></div><div style="left:190.72px;top:270.36px;width:31.79px;height:31px;background:#cfd2de"></div><div class="t" style="left:190.72px;top:258.86px;width:31.79px;height:12px;line-height:12.5px;text-align:center;font-size:9px;color:#111114;-webkit-text-stroke:.25px #111114;letter-spacing:-.1px">222B</div><div class="t" style="left:190.72px;top:270.16px;width:31.79px;height:31px;line-height:31px;text-align:center;font-size:18.500px;-webkit-text-stroke:.3px #878993;font-family:'DejaVu Serif','Liberation Serif',serif;color:#878993">∫</div><div style="left:222.50px;top:258.36px;width:31.79px;height:12px;background:#d9dbe7"></div><div style="left:222.50px;top:270.36px;width:31.79px;height:31px;background:#f3f6fe"></div><div class="t" style="left:222.50px;top:258.86px;width:31.79px;height:12px;line-height:12.5px;text-align:center;font-size:9px;color:#111114;-webkit-text-stroke:.25px #111114;letter-spacing:-.1px">00AA</div><div class="t" style="left:222.50px;top:270.16px;width:31.79px;height:31px;line-height:31px;text-align:center;font-size:18.500px;-webkit-text-stroke:.3px #111;font-family:'Liberation Sans',sans-serif;color:#111">ª</div><div style="left:249.29px;top:296.36px;width:3.500px;height:4px;border-left:1.200px solid #83858f;border-right:1.200px solid #83858f"></div><div style="left:0;top:258.00px;width:262px;height:1px;background:#72747e"></div><div style="left:0;top:269.00px;width:262px;height:1px;background:#7f818b"></div><div style="left:0.00px;top:301.42px;width:31.79px;height:12px;background:#d9dbe7"></div><div style="left:0.00px;top:313.42px;width:31.79px;height:31px;background:#f3f6fe"></div><div class="t" style="left:0.00px;top:301.92px;width:31.79px;height:12px;line-height:12.5px;text-align:center;font-size:9px;color:#111114;-webkit-text-stroke:.25px #111114;letter-spacing:-.1px">201C</div><div class="t" style="left:0.00px;top:313.22px;width:31.79px;height:31px;line-height:31px;text-align:center;font-size:18.500px;-webkit-text-stroke:.3px #111;font-family:'DejaVu Sans','Liberation Sans',sans-serif;color:#111">“</div><div style="left:26.79px;top:339.42px;width:3.500px;height:4px;border-left:1.200px solid #83858f;border-right:1.200px solid #83858f"></div><div style="left:31.79px;top:301.42px;width:31.79px;height:12px;background:#d9dbe7"></div><div style="left:31.79px;top:313.42px;width:31.79px;height:31px;background:#f3f6fe"></div><div class="t" style="left:31.79px;top:301.92px;width:31.79px;height:12px;line-height:12.5px;text-align:center;font-size:9px;color:#111114;-webkit-text-stroke:.25px #111114;letter-spacing:-.1px">201D</div><div class="t" style="left:31.79px;top:313.22px;width:31.79px;height:31px;line-height:31px;text-align:center;font-size:18.500px;-webkit-text-stroke:.3px #111;font-family:'DejaVu Sans','Liberation Sans',sans-serif;color:#111">”</div><div style="left:58.57px;top:339.42px;width:3.500px;height:4px;border-left:1.200px solid #83858f;border-right:1.200px solid #83858f"></div><div style="left:63.57px;top:301.42px;width:31.79px;height:12px;background:#d9dbe7"></div><div style="left:63.57px;top:313.42px;width:31.79px;height:31px;background:#f3f6fe"></div><div class="t" style="left:63.57px;top:301.92px;width:31.79px;height:12px;line-height:12.5px;text-align:center;font-size:9px;color:#111114;-webkit-text-stroke:.25px #111114;letter-spacing:-.1px">2018</div><div class="t" style="left:63.57px;top:313.22px;width:31.79px;height:31px;line-height:31px;text-align:center;font-size:18.500px;-webkit-text-stroke:.3px #111;font-family:'DejaVu Sans','Liberation Sans',sans-serif;color:#111">‘</div><div style="left:90.36px;top:339.42px;width:3.500px;height:4px;border-left:1.200px solid #83858f;border-right:1.200px solid #83858f"></div><div style="left:95.36px;top:301.42px;width:31.79px;height:12px;background:#d9dbe7"></div><div style="left:95.36px;top:313.42px;width:31.79px;height:31px;background:#f3f6fe"></div><div class="t" style="left:95.36px;top:301.92px;width:31.79px;height:12px;line-height:12.5px;text-align:center;font-size:9px;color:#111114;-webkit-text-stroke:.25px #111114;letter-spacing:-.1px">2019</div><div class="t" style="left:95.36px;top:313.22px;width:31.79px;height:31px;line-height:31px;text-align:center;font-size:18.500px;-webkit-text-stroke:.3px #111;font-family:'DejaVu Sans','Liberation Sans',sans-serif;color:#111">’</div><div style="left:122.14px;top:339.42px;width:3.500px;height:4px;border-left:1.200px solid #83858f;border-right:1.200px solid #83858f"></div><div style="left:127.14px;top:301.42px;width:31.79px;height:12px;background:#d9dbe7"></div><div style="left:127.14px;top:313.42px;width:31.79px;height:31px;background:#f3f6fe"></div><div class="t" style="left:127.14px;top:301.92px;width:31.79px;height:12px;line-height:12.5px;text-align:center;font-size:9px;color:#111114;-webkit-text-stroke:.25px #111114;letter-spacing:-.1px">00F7</div><div class="t" style="left:127.14px;top:313.22px;width:31.79px;height:31px;line-height:31px;text-align:center;font-size:18.500px;-webkit-text-stroke:.3px #111;font-family:'Liberation Sans',sans-serif;color:#111">÷</div><div style="left:153.93px;top:339.42px;width:3.500px;height:4px;border-left:1.200px solid #83858f;border-right:1.200px solid #83858f"></div><div style="left:158.93px;top:301.42px;width:31.79px;height:12px;background:#d9dbe7"></div><div style="left:158.93px;top:313.42px;width:31.79px;height:31px;background:#cfd2de"></div><div class="t" style="left:158.93px;top:301.92px;width:31.79px;height:12px;line-height:12.5px;text-align:center;font-size:9px;color:#111114;-webkit-text-stroke:.25px #111114;letter-spacing:-.1px">25CA</div><div class="t" style="left:158.93px;top:313.22px;width:31.79px;height:31px;line-height:31px;text-align:center;font-size:18.500px;-webkit-text-stroke:.3px #878993;font-family:'DejaVu Serif','Liberation Serif',serif;color:#878993">◊</div><div style="left:190.72px;top:301.42px;width:31.79px;height:12px;background:#d9dbe7"></div><div style="left:190.72px;top:313.42px;width:31.79px;height:31px;background:#f3f6fe"></div><div class="t" style="left:190.72px;top:301.92px;width:31.79px;height:12px;line-height:12.5px;text-align:center;font-size:9px;color:#111114;-webkit-text-stroke:.25px #111114;letter-spacing:-.1px">00FF</div><div class="t" style="left:190.72px;top:313.22px;width:31.79px;height:31px;line-height:31px;text-align:center;font-size:18.500px;-webkit-text-stroke:.3px #111;font-family:'DejaVu Sans','Liberation Sans',sans-serif;color:#111">ÿ</div><div style="left:222.50px;top:301.42px;width:31.79px;height:12px;background:#d9dbe7"></div><div style="left:222.50px;top:313.42px;width:31.79px;height:31px;background:#f3f6fe"></div><div class="t" style="left:222.50px;top:301.92px;width:31.79px;height:12px;line-height:12.5px;text-align:center;font-size:9px;color:#111114;-webkit-text-stroke:.25px #111114;letter-spacing:-.1px">0178</div><div class="t" style="left:222.50px;top:313.22px;width:31.79px;height:31px;line-height:31px;text-align:center;font-size:18.500px;-webkit-text-stroke:.3px #111;font-family:'DejaVu Sans','Liberation Sans',sans-serif;color:#111">Ÿ</div><div style="left:0;top:301.00px;width:262px;height:1px;background:#72747e"></div><div style="left:0;top:312.00px;width:262px;height:1px;background:#7f818b"></div><div style="left:0.00px;top:344.48px;width:31.79px;height:12px;background:#d9dbe7"></div><div style="left:0.00px;top:356.48px;width:31.79px;height:31px;background:#d1d4e0"></div><div class="t" style="left:0.00px;top:344.98px;width:31.79px;height:12px;line-height:12.5px;text-align:center;font-size:9px;color:#111114;-webkit-text-stroke:.25px #111114;letter-spacing:-.1px">FBFF</div><div style="left:31.79px;top:344.48px;width:31.79px;height:12px;background:#d9dbe7"></div><div style="left:31.79px;top:356.48px;width:31.79px;height:31px;background:#f3f6fe"></div><div class="t" style="left:31.79px;top:344.98px;width:31.79px;height:12px;line-height:12.5px;text-align:center;font-size:9px;color:#111114;-webkit-text-stroke:.25px #111114;letter-spacing:-.1px">00D2</div><div class="t" style="left:31.79px;top:356.28px;width:31.79px;height:31px;line-height:31px;text-align:center;font-size:18.500px;-webkit-text-stroke:.3px #111;font-family:'DejaVu Sans','Liberation Sans',sans-serif;color:#111">Ò</div><div style="left:63.57px;top:344.48px;width:31.79px;height:12px;background:#d9dbe7"></div><div style="left:63.57px;top:356.48px;width:31.79px;height:31px;background:#f3f6fe"></div><div class="t" style="left:63.57px;top:344.98px;width:31.79px;height:12px;line-height:12.5px;text-align:center;font-size:9px;color:#111114;-webkit-text-stroke:.25px #111114;letter-spacing:-.1px">00DA</div><div class="t" style="left:63.57px;top:356.28px;width:31.79px;height:31px;line-height:31px;text-align:center;font-size:18.500px;-webkit-text-stroke:.3px #111;font-family:'DejaVu Sans','Liberation Sans',sans-serif;color:#111">Ú</div><div style="left:95.36px;top:344.48px;width:31.79px;height:12px;background:#d9dbe7"></div><div style="left:95.36px;top:356.48px;width:31.79px;height:31px;background:#f3f6fe"></div><div class="t" style="left:95.36px;top:344.98px;width:31.79px;height:12px;line-height:12.5px;text-align:center;font-size:9px;color:#111114;-webkit-text-stroke:.25px #111114;letter-spacing:-.1px">00DB</div><div class="t" style="left:95.36px;top:356.28px;width:31.79px;height:31px;line-height:31px;text-align:center;font-size:18.500px;-webkit-text-stroke:.3px #111;font-family:'DejaVu Sans','Liberation Sans',sans-serif;color:#111">Û</div><div style="left:127.14px;top:344.48px;width:31.79px;height:12px;background:#d9dbe7"></div><div style="left:127.14px;top:356.48px;width:31.79px;height:31px;background:#f3f6fe"></div><div class="t" style="left:127.14px;top:344.98px;width:31.79px;height:12px;line-height:12.5px;text-align:center;font-size:9px;color:#111114;-webkit-text-stroke:.25px #111114;letter-spacing:-.1px">00D9</div><div class="t" style="left:127.14px;top:356.28px;width:31.79px;height:31px;line-height:31px;text-align:center;font-size:18.500px;-webkit-text-stroke:.3px #111;font-family:'DejaVu Sans','Liberation Sans',sans-serif;color:#111">Ù</div><div style="left:158.93px;top:344.48px;width:31.79px;height:12px;background:#d9dbe7"></div><div style="left:158.93px;top:356.48px;width:31.79px;height:31px;background:#f3f6fe"></div><div class="t" style="left:158.93px;top:344.98px;width:31.79px;height:12px;line-height:12.5px;text-align:center;font-size:9px;color:#111114;-webkit-text-stroke:.25px #111114;letter-spacing:-.1px">0131</div><div class="t" style="left:158.93px;top:356.28px;width:31.79px;height:31px;line-height:31px;text-align:center;font-size:18.500px;-webkit-text-stroke:.3px #111;font-family:'DejaVu Sans','Liberation Sans',sans-serif;color:#111">ı</div><div style="left:185.72px;top:382.48px;width:3.500px;height:4px;border-left:1.200px solid #83858f;border-right:1.200px solid #83858f"></div><div style="left:190.72px;top:344.48px;width:31.79px;height:12px;background:#d9dbe7"></div><div style="left:190.72px;top:356.48px;width:31.79px;height:31px;background:#f3f6fe"></div><div class="t" style="left:190.72px;top:344.98px;width:31.79px;height:12px;line-height:12.5px;text-align:center;font-size:9px;color:#111114;-webkit-text-stroke:.25px #111114;letter-spacing:-.1px">02C6</div><div class="t" style="left:190.72px;top:356.28px;width:31.79px;height:31px;line-height:31px;text-align:center;font-size:18.500px;-webkit-text-stroke:.3px #111;font-family:'DejaVu Sans','Liberation Sans',sans-serif;color:#111">ˆ</div><div style="left:222.50px;top:344.48px;width:31.79px;height:12px;background:#d9dbe7"></div><div style="left:222.50px;top:356.48px;width:31.79px;height:31px;background:#f3f6fe"></div><div class="t" style="left:222.50px;top:344.98px;width:31.79px;height:12px;line-height:12.5px;text-align:center;font-size:9px;color:#111114;-webkit-text-stroke:.25px #111114;letter-spacing:-.1px">02DC</div><div class="t" style="left:222.50px;top:356.28px;width:31.79px;height:31px;line-height:31px;text-align:center;font-size:18.500px;-webkit-text-stroke:.3px #111;font-family:'DejaVu Sans','Liberation Sans',sans-serif;color:#111">˜</div><div style="left:0;top:344.00px;width:262px;height:1px;background:#72747e"></div><div style="left:0;top:355.00px;width:262px;height:1px;background:#7f818b"></div><div style="left:0.00px;top:387.54px;width:31.79px;height:12px;background:#f3f6fe"></div><div style="left:0.00px;top:399.54px;width:31.79px;height:31px;background:#f3f6fe"></div><div class="t" style="left:0.00px;top:388.04px;width:31.79px;height:12px;line-height:12.5px;text-align:center;font-size:9px;color:#111114;-webkit-text-stroke:.25px #111114;letter-spacing:-.1px">0106</div><div style="left:31.79px;top:387.54px;width:31.79px;height:12px;background:#f3f6fe"></div><div style="left:31.79px;top:399.54px;width:31.79px;height:31px;background:#f3f6fe"></div><div class="t" style="left:31.79px;top:388.04px;width:31.79px;height:12px;line-height:12.5px;text-align:center;font-size:9px;color:#111114;-webkit-text-stroke:.25px #111114;letter-spacing:-.1px">0107</div><div style="left:63.57px;top:387.54px;width:31.79px;height:12px;background:#f3f6fe"></div><div style="left:63.57px;top:399.54px;width:31.79px;height:31px;background:#f3f6fe"></div><div class="t" style="left:63.57px;top:388.04px;width:31.79px;height:12px;line-height:12.5px;text-align:center;font-size:9px;color:#111114;-webkit-text-stroke:.25px #111114;letter-spacing:-.1px">010A</div><div style="left:95.36px;top:387.54px;width:31.79px;height:12px;background:#f3f6fe"></div><div style="left:95.36px;top:399.54px;width:31.79px;height:31px;background:#f3f6fe"></div><div class="t" style="left:95.36px;top:388.04px;width:31.79px;height:12px;line-height:12.5px;text-align:center;font-size:9px;color:#111114;-webkit-text-stroke:.25px #111114;letter-spacing:-.1px">010B</div><div style="left:127.14px;top:387.54px;width:31.79px;height:12px;background:#f3f6fe"></div><div style="left:127.14px;top:399.54px;width:31.79px;height:31px;background:#f3f6fe"></div><div class="t" style="left:127.14px;top:388.04px;width:31.79px;height:12px;line-height:12.5px;text-align:center;font-size:9px;color:#111114;-webkit-text-stroke:.25px #111114;letter-spacing:-.1px">010C</div><div style="left:158.93px;top:387.54px;width:31.79px;height:12px;background:#f3f6fe"></div><div style="left:158.93px;top:399.54px;width:31.79px;height:31px;background:#f3f6fe"></div><div class="t" style="left:158.93px;top:388.04px;width:31.79px;height:12px;line-height:12.5px;text-align:center;font-size:9px;color:#111114;-webkit-text-stroke:.25px #111114;letter-spacing:-.1px">010D</div><div style="left:190.72px;top:387.54px;width:31.79px;height:12px;background:#f3f6fe"></div><div style="left:190.72px;top:399.54px;width:31.79px;height:31px;background:#f3f6fe"></div><div class="t" style="left:190.72px;top:388.04px;width:31.79px;height:12px;line-height:12.5px;text-align:center;font-size:9px;color:#111114;-webkit-text-stroke:.25px #111114;letter-spacing:-.1px">010E</div><div style="left:222.50px;top:387.54px;width:31.79px;height:12px;background:#f3f6fe"></div><div style="left:222.50px;top:399.54px;width:31.79px;height:31px;background:#f3f6fe"></div><div class="t" style="left:222.50px;top:388.04px;width:31.79px;height:12px;line-height:12.5px;text-align:center;font-size:9px;color:#111114;-webkit-text-stroke:.25px #111114;letter-spacing:-.1px">010F</div><div style="left:0;top:388.00px;width:262px;height:1px;background:#72747e"></div><div style="left:0;top:399.00px;width:262px;height:1px;background:#7f818b"></div><div style="left:0.00px;top:430.60px;width:31.79px;height:12px;background:#f3f6fe"></div><div style="left:0.00px;top:442.60px;width:31.79px;height:31px;background:#f3f6fe"></div><div class="t" style="left:0.00px;top:431.10px;width:31.79px;height:12px;line-height:12.5px;text-align:center;font-size:9px;color:#111114;-webkit-text-stroke:.25px #111114;letter-spacing:-.1px">012C</div><div style="left:31.79px;top:430.60px;width:31.79px;height:12px;background:#f3f6fe"></div><div style="left:31.79px;top:442.60px;width:31.79px;height:31px;background:#f3f6fe"></div><div class="t" style="left:31.79px;top:431.10px;width:31.79px;height:12px;line-height:12.5px;text-align:center;font-size:9px;color:#111114;-webkit-text-stroke:.25px #111114;letter-spacing:-.1px">012D</div><div style="left:63.57px;top:430.60px;width:31.79px;height:12px;background:#f3f6fe"></div><div style="left:63.57px;top:442.60px;width:31.79px;height:31px;background:#f3f6fe"></div><div class="t" style="left:63.57px;top:431.10px;width:31.79px;height:12px;line-height:12.5px;text-align:center;font-size:9px;color:#111114;-webkit-text-stroke:.25px #111114;letter-spacing:-.1px">012E</div><div style="left:95.36px;top:430.60px;width:31.79px;height:12px;background:#f3f6fe"></div><div style="left:95.36px;top:442.60px;width:31.79px;height:31px;background:#f3f6fe"></div><div class="t" style="left:95.36px;top:431.10px;width:31.79px;height:12px;line-height:12.5px;text-align:center;font-size:9px;color:#111114;-webkit-text-stroke:.25px #111114;letter-spacing:-.1px">012F</div><div style="left:127.14px;top:430.60px;width:31.79px;height:12px;background:#f3f6fe"></div><div style="left:127.14px;top:442.60px;width:31.79px;height:31px;background:#f3f6fe"></div><div class="t" style="left:127.14px;top:431.10px;width:31.79px;height:12px;line-height:12.5px;text-align:center;font-size:9px;color:#111114;-webkit-text-stroke:.25px #111114;letter-spacing:-.1px">0130</div><div style="left:158.93px;top:430.60px;width:31.79px;height:12px;background:#f3f6fe"></div><div style="left:158.93px;top:442.60px;width:31.79px;height:31px;background:#f3f6fe"></div><div class="t" style="left:158.93px;top:431.10px;width:31.79px;height:12px;line-height:12.5px;text-align:center;font-size:9px;color:#111114;-webkit-text-stroke:.25px #111114;letter-spacing:-.1px">0136</div><div style="left:190.72px;top:430.60px;width:31.79px;height:12px;background:#f3f6fe"></div><div style="left:190.72px;top:442.60px;width:31.79px;height:31px;background:#f3f6fe"></div><div class="t" style="left:190.72px;top:431.10px;width:31.79px;height:12px;line-height:12.5px;text-align:center;font-size:9px;color:#111114;-webkit-text-stroke:.25px #111114;letter-spacing:-.1px">0137</div><div style="left:222.50px;top:430.60px;width:31.79px;height:12px;background:#f3f6fe"></div><div style="left:222.50px;top:442.60px;width:31.79px;height:31px;background:#f3f6fe"></div><div class="t" style="left:222.50px;top:431.10px;width:31.79px;height:12px;line-height:12.5px;text-align:center;font-size:9px;color:#111114;-webkit-text-stroke:.25px #111114;letter-spacing:-.1px">0139</div><div style="left:0;top:431.00px;width:262px;height:1px;background:#72747e"></div><div style="left:0;top:442.00px;width:262px;height:1px;background:#7f818b"></div><div style="left:31.60px;top:0;width:1px;height:471px;background:#6c6e78"></div><div style="left:62.60px;top:0;width:1px;height:471px;background:#6c6e78"></div><div style="left:94.60px;top:0;width:1px;height:471px;background:#6c6e78"></div><div style="left:126.60px;top:0;width:1px;height:471px;background:#6c6e78"></div><div style="left:158.60px;top:0;width:1px;height:471px;background:#6c6e78"></div><div style="left:190.60px;top:0;width:1px;height:471px;background:#6c6e78"></div><div style="left:221.60px;top:0;width:1px;height:471px;background:#6c6e78"></div><div style="left:253.60px;top:0;width:1px;height:471px;background:#6c6e78"></div></div><div style="left:1259.4px;top:664px;width:262px;height:14px;background:linear-gradient(#eef0fa,#e2e4ef);border-top:1px solid #b5b7c2"></div><div style="left:1263.0px;top:665.2px;width:46.5px;height:12px;border:1px solid #acaeb9;border-radius:4.5px;background:linear-gradient(#f5f7ff,#e4e6f0)"></div><div class="t" style="left:1266.5px;top:666.2px;font-size:8px;line-height:10px;color:#878993">Size</div><svg style="left:1300.5px;top:669px" width="6" height="5" viewBox="0 0 6 5"><path d="M0 0h5.6L2.8 4.2z" fill="#6f717b"/></svg><div style="left:1312.3px;top:665.2px;width:11.0px;height:12px;border:1px solid #acaeb9;border-radius:4.5px;background:linear-gradient(#f5f7ff,#e4e6f0)"></div><div style="left:1326.5px;top:665.2px;width:11.5px;height:12px;border:1px solid #acaeb9;border-radius:4.5px;background:linear-gradient(#f5f7ff,#e4e6f0)"></div><div style="left:1341.4px;top:665.2px;width:72.0px;height:12px;border:1px solid #acaeb9;border-radius:4.5px;background:linear-gradient(#f5f7ff,#e4e6f0)"></div><div class="t" style="left:1344.9px;top:666.2px;font-size:8px;line-height:10px;color:#878993">Unicode</div><svg style="left:1404.4px;top:669px" width="6" height="5" viewBox="0 0 6 5"><path d="M0 0h5.6L2.8 4.2z" fill="#6f717b"/></svg><div style="left:1416.6px;top:665.2px;width:72.0px;height:12px;border:1px solid #acaeb9;border-radius:4.5px;background:linear-gradient(#f5f7ff,#e4e6f0)"></div><div class="t" style="left:1420.1px;top:666.2px;font-size:8px;line-height:10px;color:#878993">Pages mode</div><svg style="left:1479.6px;top:669px" width="6" height="5" viewBox="0 0 6 5"><path d="M0 0h5.6L2.8 4.2z" fill="#6f717b"/></svg><div style="left:1492.0px;top:665.2px;width:40.0px;height:12px;border:1px solid #acaeb9;border-radius:4.5px;background:linear-gradient(#f5f7ff,#e4e6f0)"></div><div class="t" style="left:1495.5px;top:666.2px;font-size:8px;line-height:10px;color:#878993">MacOS</div><svg style="left:1313px;top:665px" width="26" height="13" viewBox="0 0 26 13"><path d="M1.800 9.800l2.200-3.200 1.600 2 1.600-2 2.200 3.200z" fill="#3c3d43"/><path d="M15.800 9.800v-3l1.800-1.200v1.600l1.800-2.600v2l1.800-3.600v6.800z" fill="#4a4b52"/></svg><div style="left:0;top:0;width:1205.5px;height:1119px;background:#f3f6fe;box-shadow:0 0 24px rgba(0,0,0,.5),1px 0 3px rgba(0,0,0,.6)"></div><div style="left:0;top:0;width:1205.5px;height:26px;background:linear-gradient(#e4e6f2,#dfe1ed)"></div><div style="left:0;top:0;width:1205.5px;height:1.500px;background:#b4b6c0"></div><div style="left:0;top:25px;width:1205.5px;height:1.500px;background:#bdbfca"></div><div style="left:1.500px;top:3px;width:4.500px;height:20px;border-left:1.500px solid #b7b9c4;border-right:1.500px solid #b7b9c4;background:#d2d4df"></div><div style="left:28.500px;top:4.500px;width:82px;height:18.500px;border:1px solid #b2b4bf;border-radius:4px;background:linear-gradient(#eef0fa,#e1e3ee 60%,#e6e8f3)"></div><div class="t" style="left:36.500px;top:6.500px;font-size:11.500px;line-height:14px;color:#1a1a1e;-webkit-text-stroke:.25px #1a1a1e;letter-spacing:-.2px">150%</div><svg style="left:0;top:0" width="170" height="26" viewBox="0 0 170 26">
<circle cx="16.100" cy="12.600" r="3.600" fill="#f0f2fb" stroke="#3c3d43" stroke-width="1.400"/><path d="M19.200 16l3 3" stroke="#1a1a1e" stroke-width="2.200" stroke-linecap="round"/>
<path d="M100.300 11.800h4.400l-2.200-2.900zM100.300 14.800h4.400l-2.200 2.900z" fill="#333"/>
<circle cx="124.600" cy="12.800" r="3.600" fill="#f0f2fb" stroke="#3c3d43" stroke-width="1.400"/><circle cx="124.600" cy="12.800" r="1.300" fill="#222"/><path d="M127.800 16.200l3.200 3.200" stroke="#1a1a1e" stroke-width="2.200" stroke-linecap="round"/>
<circle cx="146" cy="13" r="3.600" fill="#f0f2fb" stroke="#4a4b52" stroke-width="1.400"/><path d="M140.500 18l10-10.500" stroke="#555" stroke-width="1.400"/><path d="M148.800 16l3.500 3.500" stroke="#222" stroke-width="2.200" stroke-linecap="round"/>
</svg><div style="left:0;top:26.500px;width:1174.500px;height:13px;background:#f1f3fc"></div><div style="left:279.3px;top:26.500px;width:646.5px;height:13px;background:#e4e7f3"></div><div style="left:1174.500px;top:26.500px;width:31px;height:13px;background:#cdd0dc"></div><svg style="left:0;top:26px" width="1206" height="15" viewBox="0 26 1206 15"><path d="M17.41 34.2v5.3M22.87 34.2v5.3M28.32 34.2v5.3M33.78 32.5v7.0M39.24 34.2v5.3M44.69 34.2v5.3M50.15 34.2v5.3M55.60 34.2v5.3M61.06 29.0v10.5M66.52 34.2v5.3M71.97 34.2v5.3M77.43 34.2v5.3M82.88 34.2v5.3M88.34 32.5v7.0M93.80 34.2v5.3M99.25 34.2v5.3M104.71 34.2v5.3M110.16 34.2v5.3M115.62 29.0v10.5M121.08 34.2v5.3M126.53 34.2v5.3M131.99 34.2v5.3M137.44 34.2v5.3M142.90 32.5v7.0M148.36 34.2v5.3M153.81 34.2v5.3M159.27 34.2v5.3M164.72 34.2v5.3M170.18 29.0v10.5M175.64 34.2v5.3M181.09 34.2v5.3M186.55 34.2v5.3M192.00 34.2v5.3M197.46 32.5v7.0M202.92 34.2v5.3M208.37 34.2v5.3M213.83 34.2v5.3M219.28 34.2v5.3M224.74 29.0v10.5M230.20 34.2v5.3M235.65 34.2v5.3M241.11 34.2v5.3M246.56 34.2v5.3M252.02 32.5v7.0M257.48 34.2v5.3M262.93 34.2v5.3M268.39 34.2v5.3M273.84 34.2v5.3M928.56 34.2v5.3M934.02 29.0v10.5M939.48 34.2v5.3M944.93 34.2v5.3M950.39 34.2v5.3M955.84 34.2v5.3M961.30 32.5v7.0M966.76 34.2v5.3M972.21 34.2v5.3M977.67 34.2v5.3M983.12 34.2v5.3M988.58 29.0v10.5M994.04 34.2v5.3M999.49 34.2v5.3M1004.95 34.2v5.3M1010.40 34.2v5.3M1015.86 32.5v7.0M1021.32 34.2v5.3M1026.77 34.2v5.3M1032.23 34.2v5.3M1037.68 34.2v5.3M1043.14 29.0v10.5M1048.60 34.2v5.3M1054.05 34.2v5.3M1059.51 34.2v5.3M1064.96 34.2v5.3M1070.42 32.5v7.0M1075.88 34.2v5.3M1081.33 34.2v5.3M1086.79 34.2v5.3M1092.24 34.2v5.3M1097.70 29.0v10.5M1103.16 34.2v5.3M1108.61 34.2v5.3M1114.07 34.2v5.3M1119.52 34.2v5.3M1124.98 32.5v7.0M1130.44 34.2v5.3M1135.89 34.2v5.3M1141.35 34.2v5.3M1146.80 34.2v5.3M1152.26 29.0v10.5M1157.72 34.2v5.3M1163.17 34.2v5.3M1168.63 34.2v5.3" stroke="#9c9ea9" stroke-width="1"/><path d="M279.30 29.0v10.5M284.76 34.2v5.3M290.21 34.2v5.3M295.67 34.2v5.3M301.12 34.2v5.3M306.58 32.5v7.0M312.04 34.2v5.3M317.49 34.2v5.3M322.95 34.2v5.3M328.40 34.2v5.3M333.86 29.0v10.5M339.32 34.2v5.3M344.77 34.2v5.3M350.23 34.2v5.3M355.68 34.2v5.3M361.14 32.5v7.0M366.60 34.2v5.3M372.05 34.2v5.3M377.51 34.2v5.3M382.96 34.2v5.3M388.42 29.0v10.5M393.88 34.2v5.3M399.33 34.2v5.3M404.79 34.2v5.3M410.24 34.2v5.3M415.70 32.5v7.0M421.16 34.2v5.3M426.61 34.2v5.3M432.07 34.2v5.3M437.52 34.2v5.3M442.98 29.0v10.5M448.44 34.2v5.3M453.89 34.2v5.3M459.35 34.2v5.3M464.80 34.2v5.3M470.26 32.5v7.0M475.72 34.2v5.3M481.17 34.2v5.3M486.63 34.2v5.3M492.08 34.2v5.3M497.54 29.0v10.5M503.00 34.2v5.3M508.45 34.2v5.3M513.91 34.2v5.3M519.36 34.2v5.3M524.82 32.5v7.0M530.28 34.2v5.3M535.73 34.2v5.3M541.19 34.2v5.3M546.64 34.2v5.3M552.10 29.0v10.5M557.56 34.2v5.3M563.01 34.2v5.3M568.47 34.2v5.3M573.92 34.2v5.3M579.38 32.5v7.0M584.84 34.2v5.3M590.29 34.2v5.3M595.75 34.2v5.3M601.20 34.2v5.3M606.66 29.0v10.5M612.12 34.2v5.3M617.57 34.2v5.3M623.03 34.2v5.3M628.48 34.2v5.3M633.94 32.5v7.0M639.40 34.2v5.3M644.85 34.2v5.3M650.31 34.2v5.3M655.76 34.2v5.3M661.22 29.0v10.5M666.68 34.2v5.3M672.13 34.2v5.3M677.59 34.2v5.3M683.04 34.2v5.3M688.50 32.5v7.0M693.96 34.2v5.3M699.41 34.2v5.3M704.87 34.2v5.3M710.32 34.2v5.3M715.78 29.0v10.5M721.24 34.2v5.3M726.69 34.2v5.3M732.15 34.2v5.3M737.60 34.2v5.3M743.06 32.5v7.0M748.52 34.2v5.3M753.97 34.2v5.3M759.43 34.2v5.3M764.88 34.2v5.3M770.34 29.0v10.5M775.80 34.2v5.3M781.25 34.2v5.3M786.71 34.2v5.3M792.16 34.2v5.3M797.62 32.5v7.0M803.08 34.2v5.3M808.53 34.2v5.3M813.99 34.2v5.3M819.44 34.2v5.3M824.90 29.0v10.5M830.36 34.2v5.3M835.81 34.2v5.3M841.27 34.2v5.3M846.72 34.2v5.3M852.18 32.5v7.0M857.64 34.2v5.3M863.09 34.2v5.3M868.55 34.2v5.3M874.00 34.2v5.3M879.46 29.0v10.5M884.92 34.2v5.3M890.37 34.2v5.3M895.83 34.2v5.3M901.28 34.2v5.3M906.74 32.5v7.0M912.20 34.2v5.3M917.65 34.2v5.3M923.11 34.2v5.3" stroke="#18181c" stroke-width="1.150"/><svg x="13.500" y="26" width="1161" height="15" viewBox="13.500 26 1161 15"><text x="8.5" y="32.100" font-size="6" font-weight="bold" fill="#1c1c21" font-family="Liberation Sans,sans-serif">-500</text><text x="63.1" y="32.100" font-size="6" font-weight="bold" fill="#1c1c21" font-family="Liberation Sans,sans-serif">-400</text><text x="117.6" y="32.100" font-size="6" font-weight="bold" fill="#1c1c21" font-family="Liberation Sans,sans-serif">-300</text><text x="172.2" y="32.100" font-size="6" font-weight="bold" fill="#1c1c21" font-family="Liberation Sans,sans-serif">-200</text><text x="226.7" y="32.100" font-size="6" font-weight="bold" fill="#1c1c21" font-family="Liberation Sans,sans-serif">-100</text><text x="335.9" y="32.100" font-size="6" font-weight="bold" fill="#1c1c21" font-family="Liberation Sans,sans-serif">100</text><text x="390.4" y="32.100" font-size="6" font-weight="bold" fill="#1c1c21" font-family="Liberation Sans,sans-serif">200</text><text x="445.0" y="32.100" font-size="6" font-weight="bold" fill="#1c1c21" font-family="Liberation Sans,sans-serif">300</text><text x="499.5" y="32.100" font-size="6" font-weight="bold" fill="#1c1c21" font-family="Liberation Sans,sans-serif">400</text><text x="554.1" y="32.100" font-size="6" font-weight="bold" fill="#1c1c21" font-family="Liberation Sans,sans-serif">500</text><text x="608.7" y="32.100" font-size="6" font-weight="bold" fill="#1c1c21" font-family="Liberation Sans,sans-serif">600</text><text x="663.2" y="32.100" font-size="6" font-weight="bold" fill="#1c1c21" font-family="Liberation Sans,sans-serif">700</text><text x="717.8" y="32.100" font-size="6" font-weight="bold" fill="#1c1c21" font-family="Liberation Sans,sans-serif">800</text><text x="772.3" y="32.100" font-size="6" font-weight="bold" fill="#1c1c21" font-family="Liberation Sans,sans-serif">900</text><text x="826.9" y="32.100" font-size="6" font-weight="bold" fill="#1c1c21" font-family="Liberation Sans,sans-serif">1000</text><text x="881.5" y="32.100" font-size="6" font-weight="bold" fill="#1c1c21" font-family="Liberation Sans,sans-serif">1100</text><text x="936.0" y="32.100" font-size="6" font-weight="bold" fill="#1c1c21" font-family="Liberation Sans,sans-serif">1200</text><text x="990.6" y="32.100" font-size="6" font-weight="bold" fill="#1c1c21" font-family="Liberation Sans,sans-serif">1300</text><text x="1045.1" y="32.100" font-size="6" font-weight="bold" fill="#1c1c21" font-family="Liberation Sans,sans-serif">1400</text><text x="1099.7" y="32.100" font-size="6" font-weight="bold" fill="#1c1c21" font-family="Liberation Sans,sans-serif">1500</text><text x="1154.3" y="32.100" font-size="6" font-weight="bold" fill="#1c1c21" font-family="Liberation Sans,sans-serif">1600</text></svg><path d="M1174 39.8H1206" stroke="#303137" stroke-width="1.5"/><path d="M0 27.200H9.500Q12.200 27.200 12.200 30V41" fill="none" stroke="#26272c" stroke-width="1.400"/><path d="M3.500 33.500h6M3.500 33.500l2.500-2M3.500 33.500l2.500 2M6 31v5.500" fill="none" stroke="#b4b6c2" stroke-width=".9"/><path d="M12 39.800H1176" stroke="#222328" stroke-width="1.800"/><circle cx="279.3" cy="34.500" r="2.300" fill="#e4e7f3" stroke="#222" stroke-width="1.200"/><path d="M277.3 37l2 2.500 2-2.500z" fill="#222"/><text x="281.8" y="32" font-size="5" font-weight="bold" fill="#222" font-family="Liberation Sans,sans-serif">0</text><circle cx="925.800" cy="34.300" r="2.300" fill="#e4e7f3" stroke="#444" stroke-width="1.200"/><path d="M923.800 37l2 2.500 2-2.500z" fill="#444"/><circle cx="1180.7" cy="33.4" r="3.5" fill="#7f8088" stroke="#26272c" stroke-width="1.6"/><circle cx="1190.5" cy="33.400" r="3.3" fill="#cfd2dd" stroke="#a3a5b0" stroke-width="1.1"/><path d="M1189.0 31.9l3 3m0-3l-3 3" stroke="#a0a2ad" stroke-width=".9"/><circle cx="1199.9" cy="33.400" r="3.3" fill="#cfd2dd" stroke="#a3a5b0" stroke-width="1.1"/><path d="M1198.4 31.9l3 3m0-3l-3 3" stroke="#a0a2ad" stroke-width=".9"/></svg><svg style="left:0;top:40px" width="1206" height="1055" viewBox="0 40 1206 1055"><defs><linearGradient id="sbg" x1="0" x2="1" y1="0" y2="0"><stop offset="0" stop-color="#e4e7f4"/><stop offset=".8" stop-color="#f0f2fd"/><stop offset="1" stop-color="#f6f8ff"/></linearGradient></defs><rect x="1192.500" y="40.700" width="13" height="1040.300" fill="url(#sbg)"/><path d="M24 75.8H1192.500" stroke="#cdd0de" stroke-width="1.300"/><path d="M24 108.5H1192.500" stroke="#cdd0de" stroke-width="1.300"/><path d="M24 299.3H1192.500" stroke="#d3d6e5" stroke-width="1.300"/><path d="M13 732.4H1192.500" stroke="#dfe2ef" stroke-width="1.300"/><path d="M2.850 896.100H1192.500" stroke="#989aa6" stroke-width="1.250" stroke-dasharray="9.800 2.150"/><path d="M279.7 35.500V1080" stroke="#989aa6" stroke-width="1.250" stroke-dasharray="9.800 2.150"/><path d="M926.0 35.500V1080" stroke="#989aa6" stroke-width="1.250" stroke-dasharray="9.800 2.150"/><path d="M7.0 1092.42h4.5M5.5 1086.96h6.0M7.0 1081.50h4.5M7.0 1076.05h4.5M7.0 1070.59h4.5M7.0 1065.14h4.5M4.5 1059.68h7.0M7.0 1054.22h4.5M7.0 1048.77h4.5M7.0 1043.31h4.5M7.0 1037.86h4.5M5.5 1032.40h6.0M7.0 1026.94h4.5M7.0 1021.49h4.5M7.0 1016.03h4.5M7.0 1010.58h4.5M4.5 1005.12h7.0M7.0 999.66h4.5M7.0 994.21h4.5M7.0 988.75h4.5M7.0 983.30h4.5M5.5 977.84h6.0M7.0 972.38h4.5M7.0 966.93h4.5M7.0 961.47h4.5M7.0 956.02h4.5M4.5 950.56h7.0M7.0 945.10h4.5M7.0 939.65h4.5M7.0 934.19h4.5M7.0 928.74h4.5M5.5 923.28h6.0M7.0 917.82h4.5M7.0 912.37h4.5M7.0 906.91h4.5M7.0 901.46h4.5M4.5 896.00h7.0M7.0 890.54h4.5M7.0 885.09h4.5M7.0 879.63h4.5M7.0 874.18h4.5M5.5 868.72h6.0M7.0 863.26h4.5M7.0 857.81h4.5M7.0 852.35h4.5M7.0 846.90h4.5M4.5 841.44h7.0M7.0 835.98h4.5M7.0 830.53h4.5M7.0 825.07h4.5M7.0 819.62h4.5M5.5 814.16h6.0M7.0 808.70h4.5M7.0 803.25h4.5M7.0 797.79h4.5M7.0 792.34h4.5M4.5 786.88h7.0M7.0 781.42h4.5M7.0 775.97h4.5M7.0 770.51h4.5M7.0 765.06h4.5M5.5 759.60h6.0M7.0 754.14h4.5M7.0 748.69h4.5M7.0 743.23h4.5M7.0 737.78h4.5M4.5 732.32h7.0M7.0 726.86h4.5M7.0 721.41h4.5M7.0 715.95h4.5M7.0 710.50h4.5M5.5 705.04h6.0M7.0 699.58h4.5M7.0 694.13h4.5M7.0 688.67h4.5M7.0 683.22h4.5M4.5 677.76h7.0M7.0 672.30h4.5M7.0 666.85h4.5M7.0 661.39h4.5M7.0 655.94h4.5M5.5 650.48h6.0M7.0 645.02h4.5M7.0 639.57h4.5M7.0 634.11h4.5M7.0 628.66h4.5M4.5 623.20h7.0M7.0 617.74h4.5M7.0 612.29h4.5M7.0 606.83h4.5M7.0 601.38h4.5M5.5 595.92h6.0M7.0 590.46h4.5M7.0 585.01h4.5M7.0 579.55h4.5M7.0 574.10h4.5M4.5 568.64h7.0M7.0 563.18h4.5M7.0 557.73h4.5M7.0 552.27h4.5M7.0 546.82h4.5M5.5 541.36h6.0M7.0 535.90h4.5M7.0 530.45h4.5M7.0 524.99h4.5M7.0 519.54h4.5M4.5 514.08h7.0M7.0 508.62h4.5M7.0 503.17h4.5M7.0 497.71h4.5M7.0 492.26h4.5M5.5 486.80h6.0M7.0 481.34h4.5M7.0 475.89h4.5M7.0 470.43h4.5M7.0 464.98h4.5M4.5 459.52h7.0M7.0 454.06h4.5M7.0 448.61h4.5M7.0 443.15h4.5M7.0 437.70h4.5M5.5 432.24h6.0M7.0 426.78h4.5M7.0 421.33h4.5M7.0 415.87h4.5M7.0 410.42h4.5M4.5 404.96h7.0M7.0 399.50h4.5M7.0 394.05h4.5M7.0 388.59h4.5M7.0 383.14h4.5M5.5 377.68h6.0M7.0 372.22h4.5M7.0 366.77h4.5M7.0 361.31h4.5M7.0 355.86h4.5M4.5 350.40h7.0M7.0 344.94h4.5M7.0 339.49h4.5M7.0 334.03h4.5M7.0 328.58h4.5M5.5 323.12h6.0M7.0 317.66h4.5M7.0 312.21h4.5M7.0 306.75h4.5M7.0 301.30h4.5M4.5 295.84h7.0M7.0 290.38h4.5M7.0 284.93h4.5M7.0 279.47h4.5M7.0 274.02h4.5M5.5 268.56h6.0M7.0 263.10h4.5M7.0 257.65h4.5M7.0 252.19h4.5M7.0 246.74h4.5M4.5 241.28h7.0M7.0 235.82h4.5M7.0 230.37h4.5M7.0 224.91h4.5M7.0 219.46h4.5M5.5 214.00h6.0M7.0 208.54h4.5M7.0 203.09h4.5M7.0 197.63h4.5M7.0 192.18h4.5M4.5 186.72h7.0M7.0 181.26h4.5M7.0 175.81h4.5M7.0 170.35h4.5M7.0 164.90h4.5M5.5 159.44h6.0M7.0 153.98h4.5M7.0 148.53h4.5M7.0 143.07h4.5M7.0 137.62h4.5M4.5 132.16h7.0M7.0 126.70h4.5M7.0 121.25h4.5M7.0 115.79h4.5M7.0 110.34h4.5M5.5 104.88h6.0M7.0 99.42h4.5M7.0 93.97h4.5M7.0 88.51h4.5M7.0 83.06h4.5M4.5 77.60h7.0M7.0 72.14h4.5M7.0 66.69h4.5M7.0 61.23h4.5M7.0 55.78h4.5M5.5 50.32h6.0M7.0 44.86h4.5" stroke="#989aa5" stroke-width="1"/><text x="11" y="1059.2" text-anchor="end" font-size="6" font-weight="bold" fill="#15151a" font-family="Liberation Sans,sans-serif">-300</text><text x="11" y="1004.6" text-anchor="end" font-size="6" font-weight="bold" fill="#15151a" font-family="Liberation Sans,sans-serif">-200</text><text x="11" y="950.1" text-anchor="end" font-size="6" font-weight="bold" fill="#15151a" font-family="Liberation Sans,sans-serif">-100</text><text x="11" y="840.9" text-anchor="end" font-size="6" font-weight="bold" fill="#15151a" font-family="Liberation Sans,sans-serif">100</text><text x="11" y="786.4" text-anchor="end" font-size="6" font-weight="bold" fill="#15151a" font-family="Liberation Sans,sans-serif">200</text><text x="11" y="731.8" text-anchor="end" font-size="6" font-weight="bold" fill="#15151a" font-family="Liberation Sans,sans-serif">300</text><text x="11" y="677.3" text-anchor="end" font-size="6" font-weight="bold" fill="#15151a" font-family="Liberation Sans,sans-serif">400</text><text x="11" y="622.7" text-anchor="end" font-size="6" font-weight="bold" fill="#15151a" font-family="Liberation Sans,sans-serif">500</text><text x="11" y="568.1" text-anchor="end" font-size="6" font-weight="bold" fill="#15151a" font-family="Liberation Sans,sans-serif">600</text><text x="11" y="513.6" text-anchor="end" font-size="6" font-weight="bold" fill="#15151a" font-family="Liberation Sans,sans-serif">700</text><text x="11" y="459.0" text-anchor="end" font-size="6" font-weight="bold" fill="#15151a" font-family="Liberation Sans,sans-serif">800</text><text x="11" y="404.5" text-anchor="end" font-size="6" font-weight="bold" fill="#15151a" font-family="Liberation Sans,sans-serif">900</text><text x="11" y="349.9" text-anchor="end" font-size="6" font-weight="bold" fill="#15151a" font-family="Liberation Sans,sans-serif">1000</text><text x="11" y="295.3" text-anchor="end" font-size="6" font-weight="bold" fill="#15151a" font-family="Liberation Sans,sans-serif">1100</text><text x="11" y="240.8" text-anchor="end" font-size="6" font-weight="bold" fill="#15151a" font-family="Liberation Sans,sans-serif">1200</text><text x="11" y="186.2" text-anchor="end" font-size="6" font-weight="bold" fill="#15151a" font-family="Liberation Sans,sans-serif">1300</text><text x="11" y="131.7" text-anchor="end" font-size="6" font-weight="bold" fill="#15151a" font-family="Liberation Sans,sans-serif">1400</text><text x="11" y="77.1" text-anchor="end" font-size="6" font-weight="bold" fill="#15151a" font-family="Liberation Sans,sans-serif">1500</text><path d="M12.200 39V1095" stroke="#17171b" stroke-width="1.500"/><rect x="14.800" y="72.2" width="7.200" height="7.200" rx=".6" fill="#b4b7c3" stroke="#303137" stroke-width="1.500"/><rect x="14.800" y="104.9" width="7.200" height="7.200" rx=".6" fill="#b4b7c3" stroke="#303137" stroke-width="1.500"/><rect x="14.800" y="295.7" width="7.200" height="7.200" rx=".6" fill="#b4b7c3" stroke="#303137" stroke-width="1.500"/><path d="M16.500 73.800h3.500v4h-3.500z" fill="#55565c"/><path d="M20.500 106.200l-3.500 2.300 3.500 2.300z" fill="#f3f6fe"/><rect x="17" y="298" width="2.500" height="2.500" fill="#222"/><circle cx="5.500" cy="896" r="2.600" fill="#f3f6fe" stroke="#222" stroke-width="1.300"/><path d="M8 894l3 2-3 2z" fill="#222"/><path d="M275.300 891.700l8.800 8.800m0-8.800l-8.800 8.800" stroke="#a9abb6" stroke-width=".9"/><circle cx="279.700" cy="896.100" r="2.300" fill="#c4c7d3" stroke="#44454b" stroke-width="1.300"/><path d="M428.400 316Q507.600 294.400 600 294.400Q849.500 294.400 849.500 540.800L849.500 846Q849.500 868.400 833.050 884.950Q816.600 901.500 791.800 901.500Q768.800 901.500 752.700 884.950Q736.600 868.400 736.600 846Q639.300 903 543.100 903Q458.300 903 398.950 854.300Q339.600 805.600 339.600 728.800Q339.600 546.500 618.400 546.500L736.300 546.500L736.300 526.800Q736.300 388.800 580 388.800Q540.500 389.300 470.600 397.600Q446.800 400.200 431 400.200Q413.100 400.200 400.950 388.200Q388.800 376.200 388.800 358Q388.800 326.300 428.400 316ZM736.600 629.200L736.600 768.700Q639.300 801.500 577.600 801.500Q450.800 801.200 450.800 720.300Q450.800 629.100 630 629.200Z" fill="none" stroke="#3f4046" stroke-width="1.250"/><path d="M427.1 314.7h2.600v2.600h-2.600zM598.7 293.1h2.600v2.600h-2.600zM848.2 539.5h2.600v2.600h-2.600zM848.2 844.7h2.600v2.600h-2.600zM790.5 900.2h2.600v2.600h-2.600zM735.3 844.7h2.600v2.600h-2.600zM541.8 901.7h2.600v2.600h-2.600zM338.3 727.5h2.600v2.600h-2.600zM617.1 545.2h2.600v2.600h-2.600zM735.0 525.5h2.600v2.600h-2.600zM578.7 387.5h2.600v2.600h-2.600zM469.3 396.3h2.600v2.600h-2.600zM429.7 398.9h2.600v2.600h-2.600zM387.5 356.7h2.600v2.600h-2.600zM735.3 627.9h2.600v2.600h-2.600zM735.3 767.4h2.600v2.600h-2.600zM576.3 800.2h2.600v2.600h-2.600zM449.5 719.0h2.600v2.600h-2.600zM628.7 627.9h2.600v2.600h-2.600z" fill="#111"/><path d="M506.6 293.4h2v2h-2zM848.5 293.4h2v2h-2zM848.5 867.4h2v2h-2zM815.6 900.5h2v2h-2zM767.8 900.5h2v2h-2zM735.6 867.4h2v2h-2zM638.3 902.0h2v2h-2zM457.3 902.0h2v2h-2zM338.6 804.6h2v2h-2zM338.6 545.5h2v2h-2zM735.0 387.8h2v2h-2zM539.5 388.3h2v2h-2zM445.8 399.2h2v2h-2zM412.1 399.2h2v2h-2zM387.8 375.2h2v2h-2zM387.8 325.3h2v2h-2zM638.3 800.5h2v2h-2zM449.8 800.2h2v2h-2zM449.8 628.1h2v2h-2z" fill="#222"/><path d="M738.500 541q1.500 2 0 4.500" fill="none" stroke="#b5b7c2" stroke-width=".8"/><path d="M623.500 625.500h4l1.500 2" fill="none" stroke="#b0b2bd" stroke-width=".8"/></svg><div style="left:1196px;top:547.800px;width:7px;height:15.500px;border-radius:3.500px;background:#b9bcc9"></div><div style="left:1192.8px;top:41.2px;width:12.2px;height:11.8px;border:1.2px solid #9d9fab;border-radius:3px;background:#f3f6fe;box-shadow:0 1px 1px rgba(0,0,0,.25)"></div><svg style="left:1193px;top:41.1px" width="12" height="12" viewBox="0 0 12 12"><path d="M3.500 3h4l1.500 1.500v4h-5.500z" fill="#d9dbe6" stroke="#44454b" stroke-width="1.300"/></svg><div style="left:13.200px;top:1080.500px;width:1192.3px;height:14.500px;background:linear-gradient(#eceffa,#f3f6fe)"></div><div style="left:13px;top:1080px;width:1180px;height:1px;background:#d2d5e2"></div><div style="left:628px;top:1084.500px;width:15px;height:7px;border-radius:3.500px;background:#c3c6d2"></div><div style="left:14.5px;top:1081.5px;width:11.5px;height:12.5px;border:1.300px solid #9ea0ac;border-radius:5px;background:#f5f8ff;box-shadow:0 1px 1px rgba(0,0,0,.25)"></div><div style="left:28.7px;top:1081.5px;width:11.5px;height:12.5px;border:1.300px solid #9ea0ac;border-radius:5px;background:#f5f8ff;box-shadow:0 1px 1px rgba(0,0,0,.25)"></div><div style="left:42.5px;top:1081.5px;width:37.5px;height:12.5px;border:1.300px solid #9ea0ac;border-radius:5px;background:#f5f8ff;box-shadow:0 1px 1px rgba(0,0,0,.25)"></div><div class="t" style="left:46.500px;top:1083px;font-size:8.500px;line-height:10px;color:#111;-webkit-text-stroke:.3px #111;letter-spacing:-.1px">150%</div><svg style="left:0;top:1076px" width="90" height="20" viewBox="0 1076 90 20">
<path d="M17.300 1089.800q0-2.500 1.700-3.500q-.2-1.800 1.300-1.800q1.500 0 1.300 1.800q1.700 1 1.700 3.500z" fill="#16161a"/><path d="M20.300 1086v3.500" stroke="#f5f8ff" stroke-width=".7"/>
<path d="M32.800 1084.500h3.600M34.600 1084.500v6M32.800 1090.500h3.600" stroke="#16161a" stroke-width="1.300"/>
<path d="M70.600 1085.800h6l-3 3.800z" fill="#16161a"/>
<path d="M14.500 1077v3.500M16.500 1077.500v3M18.500 1077v3.500M20.500 1077.500l1.500 3" stroke="#33343a" stroke-width="1.100"/>
</svg><div style="left:1180.5px;top:1081.5px;width:11.5px;height:12.5px;border:1.300px solid #9ea0ac;border-radius:5px;background:#f5f8ff;box-shadow:0 1px 1px rgba(0,0,0,.25)"></div><svg style="left:1180.500px;top:1081.500px" width="12" height="12" viewBox="0 0 12 12"><path d="M3 6.500l3-3 3 3v2.500h-6z" fill="#222"/></svg><div style="left:0;top:1094.500px;width:1205.5px;height:24.500px;background:#c1c4d0;overflow:hidden"><div style="left:0;top:0;width:1177px;height:22px;background:#f3f6fe"></div><div style="left:0;top:0;width:1177px;height:11.500px;background:#cfd2de"></div><div class="t" style="left:-0.90px;top:0.500px;width:31.34px;height:11px;line-height:11.500px;text-align:center;font-size:7.600px;color:#73757f;overflow:hidden">D</div><div class="t" style="left:-1.40px;top:15.3px;width:31.84px;height:20px;line-height:22px;text-align:center;font-size:17.500px;font-family:'DejaVu Sans',sans-serif;color:#111">D</div><div class="t" style="left:30.94px;top:0.500px;width:31.34px;height:11px;line-height:11.500px;text-align:center;font-size:7.600px;color:#73757f;overflow:hidden">E</div><div class="t" style="left:30.44px;top:15.3px;width:31.84px;height:20px;line-height:22px;text-align:center;font-size:17.500px;font-family:'DejaVu Sans',sans-serif;color:#111">E</div><div class="t" style="left:62.78px;top:0.500px;width:31.34px;height:11px;line-height:11.500px;text-align:center;font-size:7.600px;color:#73757f;overflow:hidden">F</div><div class="t" style="left:62.28px;top:15.3px;width:31.84px;height:20px;line-height:22px;text-align:center;font-size:17.500px;font-family:'DejaVu Sans',sans-serif;color:#111">F</div><div class="t" style="left:94.62px;top:0.500px;width:31.34px;height:11px;line-height:11.500px;text-align:center;font-size:7.600px;color:#73757f;overflow:hidden">G</div><div class="t" style="left:94.12px;top:15.3px;width:31.84px;height:20px;line-height:22px;text-align:center;font-size:17.500px;font-family:'DejaVu Sans',sans-serif;color:#111">G</div><div class="t" style="left:126.46px;top:0.500px;width:31.34px;height:11px;line-height:11.500px;text-align:center;font-size:7.600px;color:#73757f;overflow:hidden">H</div><div class="t" style="left:125.96px;top:15.3px;width:31.84px;height:20px;line-height:22px;text-align:center;font-size:17.500px;font-family:'DejaVu Sans',sans-serif;color:#111">H</div><div class="t" style="left:158.30px;top:0.500px;width:31.34px;height:11px;line-height:11.500px;text-align:center;font-size:7.600px;color:#73757f;overflow:hidden">I</div><div class="t" style="left:157.80px;top:15.3px;width:31.84px;height:20px;line-height:22px;text-align:center;font-size:17.500px;font-family:'DejaVu Sans',sans-serif;color:#111">I</div><div class="t" style="left:190.14px;top:0.500px;width:31.34px;height:11px;line-height:11.500px;text-align:center;font-size:7.600px;color:#73757f;overflow:hidden">J</div><div class="t" style="left:189.64px;top:15.3px;width:31.84px;height:20px;line-height:22px;text-align:center;font-size:17.500px;font-family:'DejaVu Sans',sans-serif;color:#111">J</div><div class="t" style="left:221.98px;top:0.500px;width:31.34px;height:11px;line-height:11.500px;text-align:center;font-size:7.600px;color:#73757f;overflow:hidden">K</div><div class="t" style="left:221.48px;top:15.3px;width:31.84px;height:20px;line-height:22px;text-align:center;font-size:17.500px;font-family:'DejaVu Sans',sans-serif;color:#111">K</div><div class="t" style="left:253.82px;top:0.500px;width:31.34px;height:11px;line-height:11.500px;text-align:center;font-size:7.600px;color:#73757f;overflow:hidden">L</div><div class="t" style="left:253.32px;top:15.3px;width:31.84px;height:20px;line-height:22px;text-align:center;font-size:17.500px;font-family:'DejaVu Sans',sans-serif;color:#111">L</div><div class="t" style="left:285.66px;top:0.500px;width:31.34px;height:11px;line-height:11.500px;text-align:center;font-size:7.600px;color:#73757f;overflow:hidden">M</div><div class="t" style="left:285.16px;top:15.3px;width:31.84px;height:20px;line-height:22px;text-align:center;font-size:17.500px;font-family:'DejaVu Sans',sans-serif;color:#111">M</div><div class="t" style="left:317.50px;top:0.500px;width:31.34px;height:11px;line-height:11.500px;text-align:center;font-size:7.600px;color:#73757f;overflow:hidden">N</div><div class="t" style="left:317.00px;top:15.3px;width:31.84px;height:20px;line-height:22px;text-align:center;font-size:17.500px;font-family:'DejaVu Sans',sans-serif;color:#111">N</div><div class="t" style="left:349.34px;top:0.500px;width:31.34px;height:11px;line-height:11.500px;text-align:center;font-size:7.600px;color:#73757f;overflow:hidden">O</div><div class="t" style="left:348.84px;top:15.3px;width:31.84px;height:20px;line-height:22px;text-align:center;font-size:17.500px;font-family:'DejaVu Sans',sans-serif;color:#111">O</div><div class="t" style="left:381.18px;top:0.500px;width:31.34px;height:11px;line-height:11.500px;text-align:center;font-size:7.600px;color:#73757f;overflow:hidden">P</div><div class="t" style="left:380.68px;top:15.3px;width:31.84px;height:20px;line-height:22px;text-align:center;font-size:17.500px;font-family:'DejaVu Sans',sans-serif;color:#111">P</div><div class="t" style="left:413.02px;top:0.500px;width:31.34px;height:11px;line-height:11.500px;text-align:center;font-size:7.600px;color:#73757f;overflow:hidden">Q</div><div class="t" style="left:412.52px;top:15.3px;width:31.84px;height:20px;line-height:22px;text-align:center;font-size:17.500px;font-family:'DejaVu Sans',sans-serif;color:#111">Q</div><div class="t" style="left:444.86px;top:0.500px;width:31.34px;height:11px;line-height:11.500px;text-align:center;font-size:7.600px;color:#73757f;overflow:hidden">R</div><div class="t" style="left:444.36px;top:15.3px;width:31.84px;height:20px;line-height:22px;text-align:center;font-size:17.500px;font-family:'DejaVu Sans',sans-serif;color:#111">R</div><div class="t" style="left:476.70px;top:0.500px;width:31.34px;height:11px;line-height:11.500px;text-align:center;font-size:7.600px;color:#73757f;overflow:hidden">S</div><div class="t" style="left:476.20px;top:15.3px;width:31.84px;height:20px;line-height:22px;text-align:center;font-size:17.500px;font-family:'DejaVu Sans',sans-serif;color:#111">S</div><div class="t" style="left:508.54px;top:0.500px;width:31.34px;height:11px;line-height:11.500px;text-align:center;font-size:7.600px;color:#73757f;overflow:hidden">T</div><div class="t" style="left:508.04px;top:15.3px;width:31.84px;height:20px;line-height:22px;text-align:center;font-size:17.500px;font-family:'DejaVu Sans',sans-serif;color:#111">T</div><div class="t" style="left:540.38px;top:0.500px;width:31.34px;height:11px;line-height:11.500px;text-align:center;font-size:7.600px;color:#73757f;overflow:hidden">U</div><div class="t" style="left:539.88px;top:15.3px;width:31.84px;height:20px;line-height:22px;text-align:center;font-size:17.500px;font-family:'DejaVu Sans',sans-serif;color:#111">U</div><div class="t" style="left:572.22px;top:0.500px;width:31.34px;height:11px;line-height:11.500px;text-align:center;font-size:7.600px;color:#73757f;overflow:hidden">V</div><div class="t" style="left:571.72px;top:15.3px;width:31.84px;height:20px;line-height:22px;text-align:center;font-size:17.500px;font-family:'DejaVu Sans',sans-serif;color:#111">V</div><div class="t" style="left:604.06px;top:0.500px;width:31.34px;height:11px;line-height:11.500px;text-align:center;font-size:7.600px;color:#73757f;overflow:hidden">W</div><div class="t" style="left:603.56px;top:15.3px;width:31.84px;height:20px;line-height:22px;text-align:center;font-size:17.500px;font-family:'DejaVu Sans',sans-serif;color:#111">W</div><div class="t" style="left:635.90px;top:0.500px;width:31.34px;height:11px;line-height:11.500px;text-align:center;font-size:7.600px;color:#73757f;overflow:hidden">X</div><div class="t" style="left:635.40px;top:15.3px;width:31.84px;height:20px;line-height:22px;text-align:center;font-size:17.500px;font-family:'DejaVu Sans',sans-serif;color:#111">X</div><div class="t" style="left:667.74px;top:0.500px;width:31.34px;height:11px;line-height:11.500px;text-align:center;font-size:7.600px;color:#73757f;overflow:hidden">Y</div><div class="t" style="left:667.24px;top:15.3px;width:31.84px;height:20px;line-height:22px;text-align:center;font-size:17.500px;font-family:'DejaVu Sans',sans-serif;color:#111">Y</div><div class="t" style="left:699.58px;top:0.500px;width:31.34px;height:11px;line-height:11.500px;text-align:center;font-size:7.600px;color:#73757f;overflow:hidden">Z</div><div class="t" style="left:699.08px;top:15.3px;width:31.84px;height:20px;line-height:22px;text-align:center;font-size:17.500px;font-family:'DejaVu Sans',sans-serif;color:#111">Z</div><div class="t" style="left:731.42px;top:0.500px;width:31.34px;height:11px;line-height:11.500px;text-align:center;font-size:7.600px;color:#73757f;overflow:hidden">bracketle</div><div class="t" style="left:730.92px;top:15.3px;width:31.84px;height:20px;line-height:22px;text-align:center;font-size:17.500px;font-family:'DejaVu Sans',sans-serif;color:#111">[</div><div class="t" style="left:763.26px;top:0.500px;width:31.34px;height:11px;line-height:11.500px;text-align:center;font-size:7.600px;color:#73757f;overflow:hidden">backslash</div><div class="t" style="left:762.76px;top:15.3px;width:31.84px;height:20px;line-height:22px;text-align:center;font-size:17.500px;font-family:'DejaVu Sans',sans-serif;color:#111">\</div><div class="t" style="left:795.10px;top:0.500px;width:31.34px;height:11px;line-height:11.500px;text-align:center;font-size:7.600px;color:#73757f;overflow:hidden">bracketri</div><div class="t" style="left:794.60px;top:15.3px;width:31.84px;height:20px;line-height:22px;text-align:center;font-size:17.500px;font-family:'DejaVu Sans',sans-serif;color:#111">]</div><div class="t" style="left:826.94px;top:0.500px;width:31.34px;height:11px;line-height:11.500px;text-align:center;font-size:7.600px;color:#73757f;overflow:hidden">asciicirc</div><div class="t" style="left:826.44px;top:15.3px;width:31.84px;height:20px;line-height:22px;text-align:center;font-size:17.500px;font-family:'DejaVu Sans',sans-serif;color:#111">^</div><div class="t" style="left:858.78px;top:0.500px;width:31.34px;height:11px;line-height:11.500px;text-align:center;font-size:7.600px;color:#73757f;overflow:hidden">underscor</div><div class="t" style="left:890.62px;top:0.500px;width:31.34px;height:11px;line-height:11.500px;text-align:center;font-size:7.600px;color:#73757f;overflow:hidden">grave</div><div class="t" style="left:890.12px;top:15.3px;width:31.84px;height:20px;line-height:22px;text-align:center;font-size:17.500px;font-family:'DejaVu Sans',sans-serif;color:#111">`</div><div style="left:921.96px;top:0;width:31.84px;height:22px;background:#3d3e43"></div><div style="left:921.96px;top:10.500px;width:31.84px;height:1.500px;background:#26272b"></div><div class="t" style="left:922.46px;top:0.500px;width:31.34px;height:11px;line-height:11.500px;text-align:center;font-size:7.600px;color:#d4d6e0;overflow:hidden">a</div><div class="t" style="left:954.30px;top:0.500px;width:31.34px;height:11px;line-height:11.500px;text-align:center;font-size:7.600px;color:#73757f;overflow:hidden">b</div><div class="t" style="left:953.80px;top:15.3px;width:31.84px;height:20px;line-height:22px;text-align:center;font-size:17.500px;font-family:'DejaVu Sans',sans-serif;color:#111">b</div><div class="t" style="left:986.14px;top:0.500px;width:31.34px;height:11px;line-height:11.500px;text-align:center;font-size:7.600px;color:#73757f;overflow:hidden">c</div><div class="t" style="left:985.64px;top:15.3px;width:31.84px;height:20px;line-height:22px;text-align:center;font-size:17.500px;font-family:'DejaVu Sans',sans-serif;color:#111">c</div><div class="t" style="left:1017.98px;top:0.500px;width:31.34px;height:11px;line-height:11.500px;text-align:center;font-size:7.600px;color:#73757f;overflow:hidden">d</div><div class="t" style="left:1017.48px;top:15.3px;width:31.84px;height:20px;line-height:22px;text-align:center;font-size:17.500px;font-family:'DejaVu Sans',sans-serif;color:#111">d</div><div class="t" style="left:1049.82px;top:0.500px;width:31.34px;height:11px;line-height:11.500px;text-align:center;font-size:7.600px;color:#73757f;overflow:hidden">e</div><div class="t" style="left:1049.32px;top:15.3px;width:31.84px;height:20px;line-height:22px;text-align:center;font-size:17.500px;font-family:'DejaVu Sans',sans-serif;color:#111">e</div><div class="t" style="left:1081.66px;top:0.500px;width:31.34px;height:11px;line-height:11.500px;text-align:center;font-size:7.600px;color:#73757f;overflow:hidden">f</div><div class="t" style="left:1081.16px;top:15.3px;width:31.84px;height:20px;line-height:22px;text-align:center;font-size:17.500px;font-family:'DejaVu Sans',sans-serif;color:#111">f</div><div class="t" style="left:1113.50px;top:0.500px;width:31.34px;height:11px;line-height:11.500px;text-align:center;font-size:7.600px;color:#73757f;overflow:hidden">g</div><div class="t" style="left:1113.00px;top:15.3px;width:31.84px;height:20px;line-height:22px;text-align:center;font-size:17.500px;font-family:'DejaVu Sans',sans-serif;color:#111">g</div><div class="t" style="left:1145.34px;top:0.500px;width:31.34px;height:11px;line-height:11.500px;text-align:center;font-size:7.600px;color:#73757f;overflow:hidden">h</div><div class="t" style="left:1144.84px;top:15.3px;width:31.84px;height:20px;line-height:22px;text-align:center;font-size:17.500px;font-family:'DejaVu Sans',sans-serif;color:#111">h</div><div style="left:-2.00px;top:0;width:1px;height:22px;background:#9d9faa"></div><div style="left:30.00px;top:0;width:1px;height:22px;background:#9d9faa"></div><div style="left:62.00px;top:0;width:1px;height:22px;background:#9d9faa"></div><div style="left:94.00px;top:0;width:1px;height:22px;background:#9d9faa"></div><div style="left:125.00px;top:0;width:1px;height:22px;background:#9d9faa"></div><div style="left:157.00px;top:0;width:1px;height:22px;background:#9d9faa"></div><div style="left:189.00px;top:0;width:1px;height:22px;background:#9d9faa"></div><div style="left:221.00px;top:0;width:1px;height:22px;background:#9d9faa"></div><div style="left:253.00px;top:0;width:1px;height:22px;background:#9d9faa"></div><div style="left:285.00px;top:0;width:1px;height:22px;background:#9d9faa"></div><div style="left:316.00px;top:0;width:1px;height:22px;background:#9d9faa"></div><div style="left:348.00px;top:0;width:1px;height:22px;background:#9d9faa"></div><div style="left:380.00px;top:0;width:1px;height:22px;background:#9d9faa"></div><div style="left:412.00px;top:0;width:1px;height:22px;background:#9d9faa"></div><div style="left:444.00px;top:0;width:1px;height:22px;background:#9d9faa"></div><div style="left:476.00px;top:0;width:1px;height:22px;background:#9d9faa"></div><div style="left:508.00px;top:0;width:1px;height:22px;background:#9d9faa"></div><div style="left:539.00px;top:0;width:1px;height:22px;background:#9d9faa"></div><div style="left:571.00px;top:0;width:1px;height:22px;background:#9d9faa"></div><div style="left:603.00px;top:0;width:1px;height:22px;background:#9d9faa"></div><div style="left:635.00px;top:0;width:1px;height:22px;background:#9d9faa"></div><div style="left:667.00px;top:0;width:1px;height:22px;background:#9d9faa"></div><div style="left:699.00px;top:0;width:1px;height:22px;background:#9d9faa"></div><div style="left:730.00px;top:0;width:1px;height:22px;background:#9d9faa"></div><div style="left:762.00px;top:0;width:1px;height:22px;background:#9d9faa"></div><div style="left:794.00px;top:0;width:1px;height:22px;background:#9d9faa"></div><div style="left:826.00px;top:0;width:1px;height:22px;background:#9d9faa"></div><div style="left:858.00px;top:0;width:1px;height:22px;background:#9d9faa"></div><div style="left:890.00px;top:0;width:1px;height:22px;background:#9d9faa"></div><div style="left:921.00px;top:0;width:1px;height:22px;background:#9d9faa"></div><div style="left:953.00px;top:0;width:1px;height:22px;background:#9d9faa"></div><div style="left:985.00px;top:0;width:1px;height:22px;background:#9d9faa"></div><div style="left:1017.00px;top:0;width:1px;height:22px;background:#9d9faa"></div><div style="left:1049.00px;top:0;width:1px;height:22px;background:#9d9faa"></div><div style="left:1081.00px;top:0;width:1px;height:22px;background:#9d9faa"></div><div style="left:1112.00px;top:0;width:1px;height:22px;background:#9d9faa"></div><div style="left:1144.00px;top:0;width:1px;height:22px;background:#9d9faa"></div><div style="left:1176.00px;top:0;width:1px;height:22px;background:#9d9faa"></div><div style="left:0;top:0;width:1177px;height:1px;background:#a9abb6"></div><div style="left:0;top:10.800px;width:1177px;height:1px;background:#a4a6b1"></div><div style="left:0;top:21.500px;width:1205.5px;height:1.300px;background:#4a4b52"></div><div style="left:0;top:22.800px;width:1205.5px;height:3px;background:#e9ebf5"></div><div style="left:1191.8px;top:2.6px;width:12.4px;height:12px;background:#e6e8f3;border-radius:2px"></div><svg style="left:1191.8px;top:2.6px" width="13" height="12" viewBox="0 0 13 12"><path d="M3.8 5.4h4.8l-2.4-3.4zM3.8 6.8h4.8l-2.4 3.4z" fill="#1a1a1e"/></svg></div><div style="left:1205px;top:1116px;width:310px;height:1.3px;background:#55565c"></div><div style="left:1205px;top:1117.3px;width:310px;height:3px;background:#e9ebf5"></div></div></body></html>
